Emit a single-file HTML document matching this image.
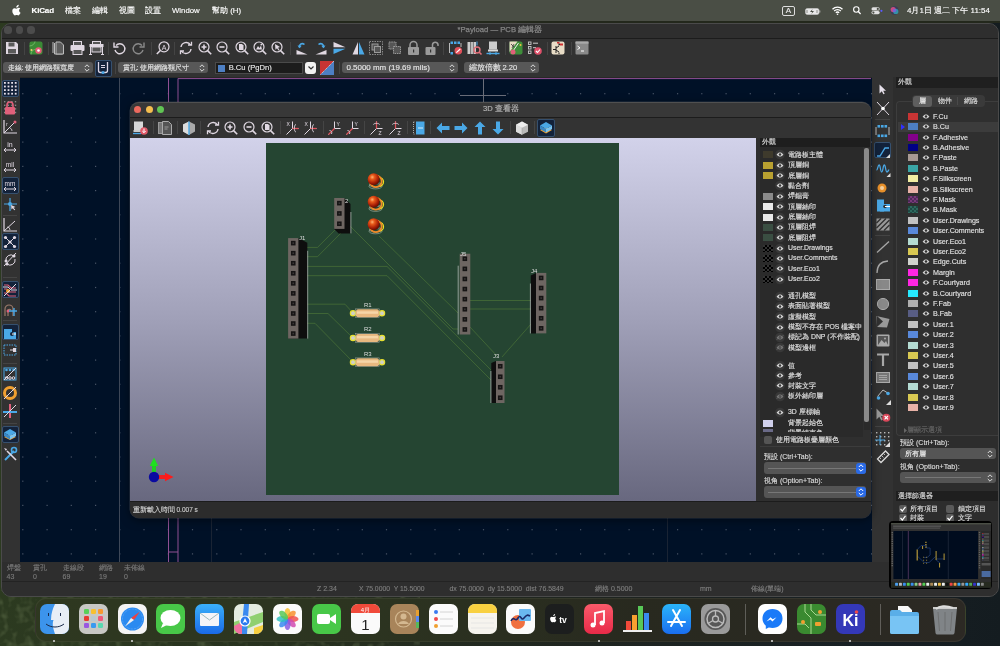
<!DOCTYPE html><html><head><meta charset="utf-8"><style>
*{box-sizing:border-box;margin:0;padding:0}
html,body{width:1000px;height:646px;overflow:hidden}
body{position:relative;font-family:"Liberation Sans",sans-serif;color:#ddd;font-size:9px;
background:#1a2014}
.a{position:absolute}
.t{position:absolute;white-space:nowrap;line-height:10px;-webkit-text-stroke:.13px}
svg{overflow:visible}

.sep{position:absolute;width:1px;background:#444}
.hsep{position:absolute;height:1px;background:#444}
.combo{position:absolute;height:11px;background:#585858;border-radius:3px;color:#e6e6e6;font-size:9px;line-height:11px;padding-left:5px;white-space:nowrap}
.hl{position:absolute;background:#10203a;border:1px solid #3a4e6a;border-radius:2px}
#wrap{position:absolute;left:0;top:0;width:1000px;height:646px;overflow:hidden;will-change:transform}</style></head><body><div id="wrap">
<div class="a" style="left:0px;top:0px;width:1000px;height:646px;background:linear-gradient(90deg,#2c3a20 0%,#26301e 30%,#1e2420 60%,#182024 85%,#141c20 100%)"></div>
<svg class="a" style="left:0px;top:590px" width="1000" height="56" viewBox="0 0 1000 56"><defs><filter id="fol" x="0" y="0" width="100%" height="100%"><feTurbulence type="fractalNoise" baseFrequency=".12" numOctaves="2" seed="7"/><feColorMatrix values="0 0 0 0 .35  0 0 0 0 .45  0 0 0 0 .22  0 0 0 1.6 -.75"/></filter></defs><rect width="420" height="56" filter="url(#fol)" opacity=".4"/></svg>
<div class="a" style="left:0px;top:0px;width:1000px;height:21px;background:#4a4e45"></div>
<svg class="a" style="left:12px;top:5px" width="8" height="10" viewBox="0 0 8 10"><path d="M5.6 1.2c.5-.6.8-1.3.7-2 -.7 0-1.4.4-1.9 1-.4.5-.8 1.2-.7 1.9.7.1 1.4-.3 1.9-.9zM6.3 2.6c-1-.1-1.9.6-2.4.6-.5 0-1.3-.6-2.1-.5C.8 2.7-.2 3.6-.2 5.5c0 1.1.4 2.3 1 3.1.5.7.9 1.3 1.6 1.3.6 0 .9-.4 1.7-.4.8 0 1 .4 1.7.4.7 0 1.1-.6 1.5-1.3.5-.7.7-1.4.7-1.4s-1.4-.5-1.4-2.1c0-1.3 1.1-1.9 1.1-2-.6-.9-1.6-1-1.9-1z" fill="#fff" transform="translate(.5 .5)"/></svg>
<div class="t" style="left:31.5px;top:5.5px;font-size:8px;color:#fff;font-weight:bold;letter-spacing:-.15px">KiCad</div>
<div class="t" style="left:65px;top:5.5px;font-size:7.8px;color:#fff;">檔案</div>
<div class="t" style="left:92px;top:5.5px;font-size:7.8px;color:#fff;">編輯</div>
<div class="t" style="left:119px;top:5.5px;font-size:7.8px;color:#fff;">視圖</div>
<div class="t" style="left:145px;top:5.5px;font-size:7.8px;color:#fff;">設置</div>
<div class="t" style="left:172px;top:5.5px;font-size:7.8px;color:#fff;">Window</div>
<div class="t" style="left:212px;top:5.5px;font-size:7.8px;color:#fff;">幫助 (H)</div>
<div class="a" style="left:782px;top:6px;width:13px;height:10px;border:1px solid #ddd;border-radius:2px"></div>
<div class="t" style="left:782px;top:6px;color:#eee;font-size:8px;width:13px;text-align:center;line-height:10px">A</div>
<svg class="a" style="left:805px;top:7.5px" width="16" height="7" viewBox="0 0 16 7"><rect x=".5" y=".5" width="13.5" height="6" rx="1.8" fill="#e8e8e8" stroke="#cfcfcf" stroke-width=".6"/><path d="M14.8 2.5v2" stroke="#bbb" stroke-width="1"/><path d="M7.6 1L5 3.9h2.2L6.4 6 9 3.1H6.8z" fill="#4a4e45"/><path d="M2 2v3M12 2v3" stroke="#4a4e45" stroke-width=".6"/></svg>
<svg class="a" style="left:832px;top:6px" width="11" height="9" viewBox="0 0 11 9"><path d="M0.5 3.2a7 7 0 0 1 10 0M2.2 5a4.5 4.5 0 0 1 6.6 0M3.9 6.8a2 2 0 0 1 3.2 0" stroke="#fff" stroke-width="1.3" fill="none"/><circle cx="5.5" cy="8.2" r=".8" fill="#fff"/></svg>
<svg class="a" style="left:853px;top:6px" width="8" height="9" viewBox="0 0 8 9"><circle cx="3.3" cy="3.5" r="2.7" stroke="#fff" stroke-width="1.1" fill="none"/><path d="M5.3 5.5L7.6 8" stroke="#fff" stroke-width="1.2"/></svg>
<svg class="a" style="left:871px;top:7px" width="12" height="7.5" viewBox="0 0 12 7.5"><rect x=".5" y=".3" width="8.2" height="3.2" rx="1.6" fill="#e0e0e0"/><rect x=".5" y="4" width="8.2" height="3.2" rx="1.6" fill="#e0e0e0"/><circle cx="6.8" cy="1.9" r="1.1" fill="#4a4e45"/><circle cx="2.4" cy="5.6" r="1.1" fill="#4a4e45"/><circle cx="10.4" cy="3.8" r="1.1" fill="#5a5aff"/></svg>
<svg class="a" style="left:890px;top:6px" width="9" height="9" viewBox="0 0 9 9"><defs><linearGradient id="sg" x1="0" y1="0" x2="1" y2="1"><stop offset="0" stop-color="#e04a8a"/><stop offset=".5" stop-color="#5a4ae0"/><stop offset="1" stop-color="#30c0e0"/></linearGradient></defs><circle cx="4.5" cy="4.5" r="4.2" fill="#3a3a5a"/><circle cx="3.2" cy="3.6" r="2.6" fill="#e0508a" opacity=".85"/><circle cx="5.8" cy="5.4" r="2.6" fill="#30b8c8" opacity=".7"/><circle cx="4.5" cy="4.5" r="1.8" fill="#7a5ae0" opacity=".8"/></svg>
<div class="t" style="left:907px;top:5.5px;font-size:8px;color:#fff;">4月1日 週二 下午 11:54</div>
<div class="a" style="left:0px;top:21px;width:1000px;height:2px;background:#23281c"></div>
<div class="a" style="left:1px;top:22.5px;width:997.5px;height:574px;background:#303030;border-radius:10px;border:1px solid #4a4a4a;overflow:hidden"></div>
<div class="a" style="left:2px;top:23.5px;width:995.5px;height:14.5px;background:#2e2e2e;border-radius:9px 9px 0 0"></div>
<div class="a" style="left:2px;top:38px;width:995.5px;height:1px;background:#1c1c1c"></div>
<div class="a" style="left:4.4px;top:26.4px;width:7.2px;height:7.2px;border-radius:50%;background:#4c4c4c"></div>
<div class="a" style="left:15.9px;top:26.4px;width:7.2px;height:7.2px;border-radius:50%;background:#4c4c4c"></div>
<div class="a" style="left:27.4px;top:26.4px;width:7.2px;height:7.2px;border-radius:50%;background:#4c4c4c"></div>
<div class="t" style="left:457.5px;top:25px;font-size:7.7px;color:#858585;-webkit-text-stroke:.25px">*Payload — PCB 編輯器</div>
<div class="a" style="left:2px;top:39px;width:995.5px;height:38px;background:#323232"></div>
<div class="a" style="left:23.5px;top:42px;width:1px;height:13px;background:#444"></div>
<div class="a" style="left:47.5px;top:42px;width:1px;height:13px;background:#444"></div>
<div class="a" style="left:108px;top:42px;width:1px;height:13px;background:#444"></div>
<div class="a" style="left:150.7px;top:42px;width:1px;height:13px;background:#444"></div>
<div class="a" style="left:173.5px;top:42px;width:1px;height:13px;background:#444"></div>
<div class="a" style="left:290px;top:42px;width:1px;height:13px;background:#444"></div>
<div class="a" style="left:443px;top:42px;width:1px;height:13px;background:#444"></div>
<div class="a" style="left:505px;top:42px;width:1px;height:13px;background:#444"></div>
<div class="a" style="left:547px;top:42px;width:1px;height:13px;background:#444"></div>
<div class="a" style="left:571px;top:42px;width:1px;height:13px;background:#444"></div>
<svg class="a" style="left:5px;top:41px" width="14" height="14" viewBox="0 0 14 14"><path d="M1 1h10l2 2v10H1z" fill="#e0d8e2"/><rect x="3.5" y="1.5" width="6" height="4" fill="#5a5a5a"/><rect x="3" y="8" width="8" height="4.5" fill="#5a5a5a"/></svg>
<svg class="a" style="left:29px;top:41px" width="14" height="14" viewBox="0 0 14 14"><rect x="0.5" y="0.5" width="13" height="13" rx="2" fill="#3b8a36"/><path d="M0.5 5C4 5 6 2 6 0.5M2 13.5C2 9 6 8 9 8" stroke="#7cc070" stroke-width=".8" fill="none"/><circle cx="9.5" cy="9.5" r="3.2" fill="#e8587a"/><circle cx="9.5" cy="9.5" r="1.3" fill="#fff"/><circle cx="2.5" cy="9" r="1" fill="#f0d070"/></svg>
<svg class="a" style="left:52px;top:41px" width="13" height="14" viewBox="0 0 13 14"><path d="M1 1v11M2.5 2v11h8" stroke="#bdbdbd" stroke-width="1" fill="none"/><path d="M4 1h4.5l3 3v9H4z" fill="#5c5c5c" stroke="#bdbdbd" stroke-width="1"/></svg>
<svg class="a" style="left:70px;top:41px" width="15" height="14" viewBox="0 0 15 14"><rect x="3.5" y="0.5" width="8" height="4" fill="#555" stroke="#e0d8e2" stroke-width="1"/><rect x="0.5" y="4" width="14" height="6" rx="1" fill="#e0d8e2"/><rect x="3" y="8.5" width="9" height="5" fill="#555" stroke="#e0d8e2" stroke-width="1"/></svg>
<svg class="a" style="left:89px;top:41px" width="15" height="14" viewBox="0 0 15 14"><rect x="3.5" y="0.5" width="8" height="3" fill="#555" stroke="#e0d8e2" stroke-width="1"/><rect x="0.5" y="3" width="14" height="3" fill="#e0d8e2"/><rect x="3" y="6" width="9" height="5" fill="#555" stroke="#e0d8e2" stroke-width="1"/><path d="M1.5 6v7.5M13.5 6v7.5M0 13.5h3M12 13.5h3" stroke="#e0d8e2" stroke-width="1"/></svg>
<svg class="a" style="left:113px;top:41px" width="13" height="14" viewBox="0 0 13 14"><path d="M3 4.5A5 5 0 1 1 2 9" stroke="#e0d8e2" stroke-width="1.4" fill="none"/><path d="M1 1.5v4.5h4.5" stroke="#e0d8e2" stroke-width="1.4" fill="none"/></svg>
<svg class="a" style="left:132px;top:41px" width="13" height="14" viewBox="0 0 13 14"><path d="M10 4.5A5 5 0 1 0 11 9" stroke="#8a8a8a" stroke-width="1.4" fill="none"/><path d="M12 1.5v4.5H7.5" stroke="#8a8a8a" stroke-width="1.4" fill="none"/></svg>
<svg class="a" style="left:155.5px;top:41px" width="14" height="14" viewBox="0 0 14 14"><circle cx="8" cy="5.8" r="5" stroke="#e0d8e2" stroke-width="1.2" fill="none"/><path d="M4.3 9.5L.8 13" stroke="#e0d8e2" stroke-width="1.6"/><text x="8" y="8.6" font-size="7" text-anchor="middle" fill="#e0d8e2" font-family="Liberation Sans">A</text></svg>
<svg class="a" style="left:179px;top:41px" width="14" height="14" viewBox="0 0 14 14"><path d="M2 6A5.2 5.2 0 0 1 11.6 4M12 8A5.2 5.2 0 0 1 2.4 10" stroke="#e0d8e2" stroke-width="1.4" fill="none"/><path d="M9 4h3.5V.8M5 10H1.5v3.2" stroke="#e0d8e2" stroke-width="1.3" fill="none"/></svg>
<svg class="a" style="left:198px;top:41px" width="14" height="14" viewBox="0 0 14 14"><circle cx="6" cy="6" r="5" stroke="#e0d8e2" stroke-width="1.2" fill="none"/><path d="M9.6 9.6L13.2 13.2" stroke="#e0d8e2" stroke-width="1.6"/><path d="M3.5 6h5M6 3.5v5" stroke="#e0d8e2" stroke-width="1.6"/></svg>
<svg class="a" style="left:216px;top:41px" width="14" height="14" viewBox="0 0 14 14"><circle cx="6" cy="6" r="5" stroke="#e0d8e2" stroke-width="1.2" fill="none"/><path d="M9.6 9.6L13.2 13.2" stroke="#e0d8e2" stroke-width="1.6"/><path d="M3.5 6h5" stroke="#e0d8e2" stroke-width="1.6"/></svg>
<svg class="a" style="left:235px;top:41px" width="14" height="14" viewBox="0 0 14 14"><circle cx="6" cy="6" r="5" stroke="#e0d8e2" stroke-width="1.2" fill="none"/><path d="M9.6 9.6L13.2 13.2" stroke="#e0d8e2" stroke-width="1.6"/><path d="M4 3h3l1.5 1.5V9H4z" fill="#e0d8e2"/></svg>
<svg class="a" style="left:253px;top:41px" width="14" height="14" viewBox="0 0 14 14"><circle cx="6" cy="6" r="5" stroke="#e0d8e2" stroke-width="1.2" fill="none"/><path d="M9.6 9.6L13.2 13.2" stroke="#e0d8e2" stroke-width="1.6"/><path d="M3 8.5L5 5l1.5 2L8 4.5l1 4z" fill="#e0d8e2"/><circle cx="8.3" cy="3.6" r=".9" fill="#e0d8e2"/></svg>
<svg class="a" style="left:271px;top:41px" width="14" height="14" viewBox="0 0 14 14"><circle cx="6" cy="6" r="5" stroke="#e0d8e2" stroke-width="1.2" fill="none"/><path d="M9.6 9.6L13.2 13.2" stroke="#e0d8e2" stroke-width="1.6"/><path d="M4 3l5 3-2 .8L8.5 9 7.5 9.5 6 7.3 4.5 8.8z" fill="#e0d8e2"/></svg>
<svg class="a" style="left:296px;top:41px" width="12" height="14" viewBox="0 0 12 14"><path d="M0.5 9L11.5 13.5H0.5z" fill="#e0d8e2"/><path d="M3.5 6.5C3 3 6 1.5 8.5 3.5" stroke="#4aa8e6" stroke-width="1.6" fill="none"/><path d="M1.5 4.5l2 2.8 2.2-2.6z" fill="#4aa8e6"/></svg>
<svg class="a" style="left:315px;top:41px" width="12" height="14" viewBox="0 0 12 14"><path d="M11.5 13.5L0.5 9v4.5z" transform="translate(12 0) scale(-1 1)" fill="#e0d8e2"/><path d="M8.5 6.5C9 3 6 1.5 3.5 3.5" stroke="#4aa8e6" stroke-width="1.6" fill="none"/><path d="M10.5 4.5l-2 2.8-2.2-2.6z" fill="#4aa8e6"/></svg>
<svg class="a" style="left:333px;top:41px" width="13" height="14" viewBox="0 0 13 14"><path d="M0.5 1L12.5 6.2H0.5z" fill="#e0d8e2"/><path d="M0.5 13L12.5 7.8H0.5z" fill="#4aa8e6"/></svg>
<svg class="a" style="left:352px;top:41px" width="13" height="14" viewBox="0 0 13 14"><path d="M6 1L0.5 13.5H6z" fill="#e0d8e2"/><path d="M7 1L12.5 13.5H7z" fill="#4aa8e6"/></svg>
<svg class="a" style="left:369px;top:41px" width="14" height="14" viewBox="0 0 14 14"><rect x="0.5" y="0.5" width="13" height="13" fill="none" stroke="#8a8a8a" stroke-dasharray="1.5 1"/><rect x="3" y="3" width="6" height="6" fill="#555" stroke="#9a9a9a"/><rect x="5.5" y="5.5" width="6" height="6" fill="#555" stroke="#9a9a9a"/></svg>
<svg class="a" style="left:388px;top:41px" width="14" height="14" viewBox="0 0 14 14"><rect x="1" y="1" width="7" height="7" fill="#555" stroke="#9a9a9a" stroke-dasharray="1.5 .8"/><rect x="5.5" y="5.5" width="7" height="7" fill="#555" stroke="#9a9a9a" stroke-dasharray="1.5 .8"/></svg>
<svg class="a" style="left:407px;top:41px" width="13" height="14" viewBox="0 0 13 14"><path d="M3 6V4a3.5 3.5 0 0 1 7 0v2" stroke="#9a9a9a" stroke-width="1.5" fill="none"/><rect x="1" y="6" width="11" height="8" rx="1" fill="#9a9a9a"/><rect x="6" y="8.5" width="1.2" height="3" fill="#333"/></svg>
<svg class="a" style="left:425px;top:41px" width="13" height="14" viewBox="0 0 13 14"><path d="M7.5 6V3.5a2.8 2.8 0 0 1 5.5 0V5" stroke="#9a9a9a" stroke-width="1.5" fill="none"/><rect x="0.5" y="6" width="10" height="8" rx="1" fill="#9a9a9a"/><rect x="5" y="8.5" width="1.2" height="3" fill="#333"/></svg>
<svg class="a" style="left:448px;top:41px" width="15" height="14" viewBox="0 0 15 14"><path d="M1.5 2v10M13 2v4" stroke="#bbb" stroke-width="1" fill="none"/><rect x="2.5" y="0.5" width="2.5" height="2.5" fill="#4aa8e6"/><rect x="6" y="0.5" width="2.5" height="2.5" fill="#4aa8e6"/><rect x="9.5" y="0.5" width="2.5" height="2.5" fill="#4aa8e6"/><rect x="2.5" y="11" width="2.5" height="2.5" fill="#4aa8e6"/><circle cx="10.3" cy="9.8" r="3.8" fill="#e0505a"/><path d="M8.3 11.6l4-3.6" stroke="#fff" stroke-width="1.2"/></svg>
<svg class="a" style="left:467px;top:41px" width="15" height="14" viewBox="0 0 15 14"><rect x="0.5" y="1" width="2.5" height="12" fill="#ccc"/><rect x="3.5" y="1" width="2.5" height="12" fill="#bbb"/><rect x="6.5" y="1" width="2.5" height="12" fill="#ccc"/><circle cx="10" cy="9" r="3" fill="none" stroke="#e0707a" stroke-width="1.4"/><path d="M12 11l2.5 2.5" stroke="#e0707a" stroke-width="1.6"/><path d="M10 0.5v4" stroke="#4aa8e6" stroke-width="1"/></svg>
<svg class="a" style="left:486px;top:41px" width="14" height="14" viewBox="0 0 14 14"><rect x="3" y="0.5" width="8" height="8" fill="#ccc"/><rect x="2" y="8.5" width="10" height="2" fill="#ddd"/><path d="M0.5 12.5h13" stroke="#4aa8e6" stroke-width="1.4"/><path d="M4 11v3M10 11v3" stroke="#4aa8e6" stroke-width="1"/></svg>
<svg class="a" style="left:509px;top:41px" width="14" height="14" viewBox="0 0 14 14"><rect x="0.5" y="0.5" width="13" height="13" rx="2" fill="#3e8e3a"/><path d="M0.5 0.5h8L0.5 11z" fill="#e6dcc4"/><path d="M2 3l3 3M3 7l2-4" stroke="#333" stroke-width=".8"/><path d="M9.5 2L3 11.5" stroke="#eee" stroke-width="1"/><circle cx="4" cy="11" r="2.5" fill="#e0607a"/><circle cx="11.5" cy="4" r="1" fill="#f0c040"/></svg>
<svg class="a" style="left:528px;top:41px" width="14" height="14" viewBox="0 0 14 14"><rect x="0.5" y="1" width="2.5" height="2.5" fill="none" stroke="#ccc" stroke-width=".9"/><rect x="0.5" y="5.5" width="2.5" height="2.5" fill="none" stroke="#ccc" stroke-width=".9"/><rect x="0.5" y="10" width="2.5" height="2.5" fill="none" stroke="#ccc" stroke-width=".9"/><path d="M5 2.2h5M5 6.7h3" stroke="#ccc" stroke-width="1"/><circle cx="10" cy="10" r="3.8" fill="#e0506a"/><path d="M8 10l1.5 1.5 2.5-3" stroke="#fff" stroke-width="1.1" fill="none"/></svg>
<svg class="a" style="left:551px;top:41px" width="14" height="14" viewBox="0 0 14 14"><rect x="0.5" y="0.5" width="13" height="13" rx="2" fill="#e8dcc6"/><path d="M2 8.5h3M5 5v7M5 7l3-2M5 9l3 2M8 4.5V2M8 11.5V13M8 3.5h4" stroke="#222" stroke-width="1" fill="none"/><rect x="9" y="2.5" width="3" height="2" fill="#d03030"/><rect x="6" y="1" width="2.5" height="1.5" fill="#d03030"/></svg>
<svg class="a" style="left:575px;top:41px" width="14" height="14" viewBox="0 0 14 14"><rect x="0.5" y="0.5" width="13" height="13" rx="1" fill="#8a8a8a"/><rect x="0.5" y="0.5" width="13" height="2.2" fill="#aaa"/><path d="M2.5 5l2.5 1.8L2.5 8.5M6 10h3" stroke="#fff" stroke-width="1" fill="none"/></svg>
<div class="combo" style="left:3px;top:62px;width:90px"></div>
<div class="t" style="left:7.5px;top:62.7px;font-size:7.1px;color:#e6e6e6;">走線: 使用網路類寬度</div>
<svg class="a" style="left:84px;top:63.5px" width="6" height="8" viewBox="0 0 6 8"><path d="M.8 3L3 .8 5.2 3M.8 5L3 7.2 5.2 5" stroke="#ddd" stroke-width="1" fill="none"/></svg>
<div class="combo" style="left:118px;top:62px;width:90px"></div>
<div class="t" style="left:122.5px;top:62.7px;font-size:7.1px;color:#e6e6e6;">貫孔: 使用網路類尺寸</div>
<svg class="a" style="left:199px;top:63.5px" width="6" height="8" viewBox="0 0 6 8"><path d="M.8 3L3 .8 5.2 3M.8 5L3 7.2 5.2 5" stroke="#ddd" stroke-width="1" fill="none"/></svg>
<div class="combo" style="left:342px;top:62px;width:116px"></div>
<div class="t" style="left:346.5px;top:62.7px;font-size:7.95px;color:#e6e6e6;">0.5000 mm (19.69 mils)</div>
<svg class="a" style="left:449px;top:63.5px" width="6" height="8" viewBox="0 0 6 8"><path d="M.8 3L3 .8 5.2 3M.8 5L3 7.2 5.2 5" stroke="#ddd" stroke-width="1" fill="none"/></svg>
<div class="combo" style="left:464px;top:62px;width:75px"></div>
<div class="t" style="left:468.5px;top:62.7px;font-size:7.5px;color:#e6e6e6;">縮放倍數 2.20</div>
<svg class="a" style="left:530px;top:63.5px" width="6" height="8" viewBox="0 0 6 8"><path d="M.8 3L3 .8 5.2 3M.8 5L3 7.2 5.2 5" stroke="#ddd" stroke-width="1" fill="none"/></svg>
<div class="a" style="left:94.5px;top:59.5px;width:17px;height:17px;background:#13223a;border:1px solid #36506e;border-radius:2px"></div>
<svg class="a" style="left:97px;top:61px" width="12" height="13" viewBox="0 0 12 13"><path d="M1.5 1v8.5a2 2 0 0 0 2 2h5a2 2 0 0 0 2-2V1" stroke="#dcd6e6" stroke-width="1.3" fill="none"/><path d="M4 4.5h4M4 6.5h4" stroke="#dcd6e6" stroke-width="1"/><circle cx="6" cy="11.6" r="1.5" fill="#4aa8e6"/></svg>
<div class="a" style="left:114.5px;top:62px;width:1px;height:12px;background:#444"></div>
<div class="a" style="left:338.5px;top:62px;width:1px;height:12px;background:#444"></div>
<div class="a" style="left:214.5px;top:62px;width:88px;height:12px;background:#1c1c1c;border:1px solid #4a4a4a"></div>
<div class="a" style="left:218px;top:64.5px;width:7px;height:7px;background:#4d7fc4"></div>
<div class="t" style="left:228.7px;top:63px;font-size:7.6px;color:#e8e8e8;">B.Cu (PgDn)</div>
<div class="a" style="left:305px;top:62px;width:11px;height:12px;background:#f2f2f2;border-radius:3px"></div>
<svg class="a" style="left:307.5px;top:66px" width="6" height="4" viewBox="0 0 6 4"><path d="M.5 .5L3 3 5.5 .5" stroke="#333" stroke-width="1.2" fill="none"/></svg>
<svg class="a" style="left:320px;top:61px" width="14" height="14" viewBox="0 0 14 14"><path d="M0 0h14v14H0z" fill="#c83434"/><path d="M14 0v14H0z" fill="#4d7fc4"/><path d="M14 0L0 14" stroke="#ddd" stroke-width="1" stroke-dasharray="1 1"/></svg>
<div class="a" style="left:2px;top:76.8px;width:995.5px;height:1px;background:#282828"></div>
<div class="a" style="left:2px;top:77px;width:18px;height:485px;background:#323232"></div>
<div class="a" style="left:20px;top:77.8px;width:851.5px;height:484.2px;background:#001127;overflow:hidden"></div>
<svg class="a" style="left:0;top:0" width="1000" height="646"><g fill="#4a5668"><rect x="22.2" y="93.1" width="1.2" height="1.2"/><rect x="22.2" y="117.3" width="1.2" height="1.2"/><rect x="22.2" y="141.5" width="1.2" height="1.2"/><rect x="22.2" y="165.8" width="1.2" height="1.2"/><rect x="22.2" y="190.0" width="1.2" height="1.2"/><rect x="22.2" y="214.2" width="1.2" height="1.2"/><rect x="22.2" y="238.4" width="1.2" height="1.2"/><rect x="22.2" y="262.6" width="1.2" height="1.2"/><rect x="22.2" y="286.9" width="1.2" height="1.2"/><rect x="22.2" y="311.1" width="1.2" height="1.2"/><rect x="22.2" y="335.3" width="1.2" height="1.2"/><rect x="22.2" y="359.5" width="1.2" height="1.2"/><rect x="22.2" y="383.7" width="1.2" height="1.2"/><rect x="22.2" y="408.0" width="1.2" height="1.2"/><rect x="22.2" y="432.2" width="1.2" height="1.2"/><rect x="22.2" y="456.4" width="1.2" height="1.2"/><rect x="22.2" y="480.6" width="1.2" height="1.2"/><rect x="22.2" y="504.8" width="1.2" height="1.2"/><rect x="22.2" y="529.1" width="1.2" height="1.2"/><rect x="22.2" y="553.3" width="1.2" height="1.2"/><rect x="46.5" y="93.1" width="1.2" height="1.2"/><rect x="46.5" y="117.3" width="1.2" height="1.2"/><rect x="46.5" y="141.5" width="1.2" height="1.2"/><rect x="46.5" y="165.8" width="1.2" height="1.2"/><rect x="46.5" y="190.0" width="1.2" height="1.2"/><rect x="46.5" y="214.2" width="1.2" height="1.2"/><rect x="46.5" y="238.4" width="1.2" height="1.2"/><rect x="46.5" y="262.6" width="1.2" height="1.2"/><rect x="46.5" y="286.9" width="1.2" height="1.2"/><rect x="46.5" y="311.1" width="1.2" height="1.2"/><rect x="46.5" y="335.3" width="1.2" height="1.2"/><rect x="46.5" y="359.5" width="1.2" height="1.2"/><rect x="46.5" y="383.7" width="1.2" height="1.2"/><rect x="46.5" y="408.0" width="1.2" height="1.2"/><rect x="46.5" y="432.2" width="1.2" height="1.2"/><rect x="46.5" y="456.4" width="1.2" height="1.2"/><rect x="46.5" y="480.6" width="1.2" height="1.2"/><rect x="46.5" y="504.8" width="1.2" height="1.2"/><rect x="46.5" y="529.1" width="1.2" height="1.2"/><rect x="46.5" y="553.3" width="1.2" height="1.2"/><rect x="70.7" y="93.1" width="1.2" height="1.2"/><rect x="70.7" y="117.3" width="1.2" height="1.2"/><rect x="70.7" y="141.5" width="1.2" height="1.2"/><rect x="70.7" y="165.8" width="1.2" height="1.2"/><rect x="70.7" y="190.0" width="1.2" height="1.2"/><rect x="70.7" y="214.2" width="1.2" height="1.2"/><rect x="70.7" y="238.4" width="1.2" height="1.2"/><rect x="70.7" y="262.6" width="1.2" height="1.2"/><rect x="70.7" y="286.9" width="1.2" height="1.2"/><rect x="70.7" y="311.1" width="1.2" height="1.2"/><rect x="70.7" y="335.3" width="1.2" height="1.2"/><rect x="70.7" y="359.5" width="1.2" height="1.2"/><rect x="70.7" y="383.7" width="1.2" height="1.2"/><rect x="70.7" y="408.0" width="1.2" height="1.2"/><rect x="70.7" y="432.2" width="1.2" height="1.2"/><rect x="70.7" y="456.4" width="1.2" height="1.2"/><rect x="70.7" y="480.6" width="1.2" height="1.2"/><rect x="70.7" y="504.8" width="1.2" height="1.2"/><rect x="70.7" y="529.1" width="1.2" height="1.2"/><rect x="70.7" y="553.3" width="1.2" height="1.2"/><rect x="95.0" y="93.1" width="1.2" height="1.2"/><rect x="95.0" y="117.3" width="1.2" height="1.2"/><rect x="95.0" y="141.5" width="1.2" height="1.2"/><rect x="95.0" y="165.8" width="1.2" height="1.2"/><rect x="95.0" y="190.0" width="1.2" height="1.2"/><rect x="95.0" y="214.2" width="1.2" height="1.2"/><rect x="95.0" y="238.4" width="1.2" height="1.2"/><rect x="95.0" y="262.6" width="1.2" height="1.2"/><rect x="95.0" y="286.9" width="1.2" height="1.2"/><rect x="95.0" y="311.1" width="1.2" height="1.2"/><rect x="95.0" y="335.3" width="1.2" height="1.2"/><rect x="95.0" y="359.5" width="1.2" height="1.2"/><rect x="95.0" y="383.7" width="1.2" height="1.2"/><rect x="95.0" y="408.0" width="1.2" height="1.2"/><rect x="95.0" y="432.2" width="1.2" height="1.2"/><rect x="95.0" y="456.4" width="1.2" height="1.2"/><rect x="95.0" y="480.6" width="1.2" height="1.2"/><rect x="95.0" y="504.8" width="1.2" height="1.2"/><rect x="95.0" y="529.1" width="1.2" height="1.2"/><rect x="95.0" y="553.3" width="1.2" height="1.2"/><rect x="119.2" y="93.1" width="1.2" height="1.2"/><rect x="119.2" y="117.3" width="1.2" height="1.2"/><rect x="119.2" y="141.5" width="1.2" height="1.2"/><rect x="119.2" y="165.8" width="1.2" height="1.2"/><rect x="119.2" y="190.0" width="1.2" height="1.2"/><rect x="119.2" y="214.2" width="1.2" height="1.2"/><rect x="119.2" y="238.4" width="1.2" height="1.2"/><rect x="119.2" y="262.6" width="1.2" height="1.2"/><rect x="119.2" y="286.9" width="1.2" height="1.2"/><rect x="119.2" y="311.1" width="1.2" height="1.2"/><rect x="119.2" y="335.3" width="1.2" height="1.2"/><rect x="119.2" y="359.5" width="1.2" height="1.2"/><rect x="119.2" y="383.7" width="1.2" height="1.2"/><rect x="119.2" y="408.0" width="1.2" height="1.2"/><rect x="119.2" y="432.2" width="1.2" height="1.2"/><rect x="119.2" y="456.4" width="1.2" height="1.2"/><rect x="119.2" y="480.6" width="1.2" height="1.2"/><rect x="119.2" y="504.8" width="1.2" height="1.2"/><rect x="119.2" y="529.1" width="1.2" height="1.2"/><rect x="119.2" y="553.3" width="1.2" height="1.2"/><rect x="143.4" y="93.1" width="1.2" height="1.2"/><rect x="143.4" y="117.3" width="1.2" height="1.2"/><rect x="143.4" y="141.5" width="1.2" height="1.2"/><rect x="143.4" y="165.8" width="1.2" height="1.2"/><rect x="143.4" y="190.0" width="1.2" height="1.2"/><rect x="143.4" y="214.2" width="1.2" height="1.2"/><rect x="143.4" y="238.4" width="1.2" height="1.2"/><rect x="143.4" y="262.6" width="1.2" height="1.2"/><rect x="143.4" y="286.9" width="1.2" height="1.2"/><rect x="143.4" y="311.1" width="1.2" height="1.2"/><rect x="143.4" y="335.3" width="1.2" height="1.2"/><rect x="143.4" y="359.5" width="1.2" height="1.2"/><rect x="143.4" y="383.7" width="1.2" height="1.2"/><rect x="143.4" y="408.0" width="1.2" height="1.2"/><rect x="143.4" y="432.2" width="1.2" height="1.2"/><rect x="143.4" y="456.4" width="1.2" height="1.2"/><rect x="143.4" y="480.6" width="1.2" height="1.2"/><rect x="143.4" y="504.8" width="1.2" height="1.2"/><rect x="143.4" y="529.1" width="1.2" height="1.2"/><rect x="143.4" y="553.3" width="1.2" height="1.2"/><rect x="167.7" y="93.1" width="1.2" height="1.2"/><rect x="167.7" y="117.3" width="1.2" height="1.2"/><rect x="167.7" y="141.5" width="1.2" height="1.2"/><rect x="167.7" y="165.8" width="1.2" height="1.2"/><rect x="167.7" y="190.0" width="1.2" height="1.2"/><rect x="167.7" y="214.2" width="1.2" height="1.2"/><rect x="167.7" y="238.4" width="1.2" height="1.2"/><rect x="167.7" y="262.6" width="1.2" height="1.2"/><rect x="167.7" y="286.9" width="1.2" height="1.2"/><rect x="167.7" y="311.1" width="1.2" height="1.2"/><rect x="167.7" y="335.3" width="1.2" height="1.2"/><rect x="167.7" y="359.5" width="1.2" height="1.2"/><rect x="167.7" y="383.7" width="1.2" height="1.2"/><rect x="167.7" y="408.0" width="1.2" height="1.2"/><rect x="167.7" y="432.2" width="1.2" height="1.2"/><rect x="167.7" y="456.4" width="1.2" height="1.2"/><rect x="167.7" y="480.6" width="1.2" height="1.2"/><rect x="167.7" y="504.8" width="1.2" height="1.2"/><rect x="167.7" y="529.1" width="1.2" height="1.2"/><rect x="167.7" y="553.3" width="1.2" height="1.2"/><rect x="191.9" y="93.1" width="1.2" height="1.2"/><rect x="191.9" y="117.3" width="1.2" height="1.2"/><rect x="191.9" y="141.5" width="1.2" height="1.2"/><rect x="191.9" y="165.8" width="1.2" height="1.2"/><rect x="191.9" y="190.0" width="1.2" height="1.2"/><rect x="191.9" y="214.2" width="1.2" height="1.2"/><rect x="191.9" y="238.4" width="1.2" height="1.2"/><rect x="191.9" y="262.6" width="1.2" height="1.2"/><rect x="191.9" y="286.9" width="1.2" height="1.2"/><rect x="191.9" y="311.1" width="1.2" height="1.2"/><rect x="191.9" y="335.3" width="1.2" height="1.2"/><rect x="191.9" y="359.5" width="1.2" height="1.2"/><rect x="191.9" y="383.7" width="1.2" height="1.2"/><rect x="191.9" y="408.0" width="1.2" height="1.2"/><rect x="191.9" y="432.2" width="1.2" height="1.2"/><rect x="191.9" y="456.4" width="1.2" height="1.2"/><rect x="191.9" y="480.6" width="1.2" height="1.2"/><rect x="191.9" y="504.8" width="1.2" height="1.2"/><rect x="191.9" y="529.1" width="1.2" height="1.2"/><rect x="191.9" y="553.3" width="1.2" height="1.2"/><rect x="216.2" y="93.1" width="1.2" height="1.2"/><rect x="216.2" y="117.3" width="1.2" height="1.2"/><rect x="216.2" y="141.5" width="1.2" height="1.2"/><rect x="216.2" y="165.8" width="1.2" height="1.2"/><rect x="216.2" y="190.0" width="1.2" height="1.2"/><rect x="216.2" y="214.2" width="1.2" height="1.2"/><rect x="216.2" y="238.4" width="1.2" height="1.2"/><rect x="216.2" y="262.6" width="1.2" height="1.2"/><rect x="216.2" y="286.9" width="1.2" height="1.2"/><rect x="216.2" y="311.1" width="1.2" height="1.2"/><rect x="216.2" y="335.3" width="1.2" height="1.2"/><rect x="216.2" y="359.5" width="1.2" height="1.2"/><rect x="216.2" y="383.7" width="1.2" height="1.2"/><rect x="216.2" y="408.0" width="1.2" height="1.2"/><rect x="216.2" y="432.2" width="1.2" height="1.2"/><rect x="216.2" y="456.4" width="1.2" height="1.2"/><rect x="216.2" y="480.6" width="1.2" height="1.2"/><rect x="216.2" y="504.8" width="1.2" height="1.2"/><rect x="216.2" y="529.1" width="1.2" height="1.2"/><rect x="216.2" y="553.3" width="1.2" height="1.2"/><rect x="240.4" y="93.1" width="1.2" height="1.2"/><rect x="240.4" y="117.3" width="1.2" height="1.2"/><rect x="240.4" y="141.5" width="1.2" height="1.2"/><rect x="240.4" y="165.8" width="1.2" height="1.2"/><rect x="240.4" y="190.0" width="1.2" height="1.2"/><rect x="240.4" y="214.2" width="1.2" height="1.2"/><rect x="240.4" y="238.4" width="1.2" height="1.2"/><rect x="240.4" y="262.6" width="1.2" height="1.2"/><rect x="240.4" y="286.9" width="1.2" height="1.2"/><rect x="240.4" y="311.1" width="1.2" height="1.2"/><rect x="240.4" y="335.3" width="1.2" height="1.2"/><rect x="240.4" y="359.5" width="1.2" height="1.2"/><rect x="240.4" y="383.7" width="1.2" height="1.2"/><rect x="240.4" y="408.0" width="1.2" height="1.2"/><rect x="240.4" y="432.2" width="1.2" height="1.2"/><rect x="240.4" y="456.4" width="1.2" height="1.2"/><rect x="240.4" y="480.6" width="1.2" height="1.2"/><rect x="240.4" y="504.8" width="1.2" height="1.2"/><rect x="240.4" y="529.1" width="1.2" height="1.2"/><rect x="240.4" y="553.3" width="1.2" height="1.2"/><rect x="264.7" y="93.1" width="1.2" height="1.2"/><rect x="264.7" y="117.3" width="1.2" height="1.2"/><rect x="264.7" y="141.5" width="1.2" height="1.2"/><rect x="264.7" y="165.8" width="1.2" height="1.2"/><rect x="264.7" y="190.0" width="1.2" height="1.2"/><rect x="264.7" y="214.2" width="1.2" height="1.2"/><rect x="264.7" y="238.4" width="1.2" height="1.2"/><rect x="264.7" y="262.6" width="1.2" height="1.2"/><rect x="264.7" y="286.9" width="1.2" height="1.2"/><rect x="264.7" y="311.1" width="1.2" height="1.2"/><rect x="264.7" y="335.3" width="1.2" height="1.2"/><rect x="264.7" y="359.5" width="1.2" height="1.2"/><rect x="264.7" y="383.7" width="1.2" height="1.2"/><rect x="264.7" y="408.0" width="1.2" height="1.2"/><rect x="264.7" y="432.2" width="1.2" height="1.2"/><rect x="264.7" y="456.4" width="1.2" height="1.2"/><rect x="264.7" y="480.6" width="1.2" height="1.2"/><rect x="264.7" y="504.8" width="1.2" height="1.2"/><rect x="264.7" y="529.1" width="1.2" height="1.2"/><rect x="264.7" y="553.3" width="1.2" height="1.2"/><rect x="288.9" y="93.1" width="1.2" height="1.2"/><rect x="288.9" y="117.3" width="1.2" height="1.2"/><rect x="288.9" y="141.5" width="1.2" height="1.2"/><rect x="288.9" y="165.8" width="1.2" height="1.2"/><rect x="288.9" y="190.0" width="1.2" height="1.2"/><rect x="288.9" y="214.2" width="1.2" height="1.2"/><rect x="288.9" y="238.4" width="1.2" height="1.2"/><rect x="288.9" y="262.6" width="1.2" height="1.2"/><rect x="288.9" y="286.9" width="1.2" height="1.2"/><rect x="288.9" y="311.1" width="1.2" height="1.2"/><rect x="288.9" y="335.3" width="1.2" height="1.2"/><rect x="288.9" y="359.5" width="1.2" height="1.2"/><rect x="288.9" y="383.7" width="1.2" height="1.2"/><rect x="288.9" y="408.0" width="1.2" height="1.2"/><rect x="288.9" y="432.2" width="1.2" height="1.2"/><rect x="288.9" y="456.4" width="1.2" height="1.2"/><rect x="288.9" y="480.6" width="1.2" height="1.2"/><rect x="288.9" y="504.8" width="1.2" height="1.2"/><rect x="288.9" y="529.1" width="1.2" height="1.2"/><rect x="288.9" y="553.3" width="1.2" height="1.2"/><rect x="313.2" y="93.1" width="1.2" height="1.2"/><rect x="313.2" y="117.3" width="1.2" height="1.2"/><rect x="313.2" y="141.5" width="1.2" height="1.2"/><rect x="313.2" y="165.8" width="1.2" height="1.2"/><rect x="313.2" y="190.0" width="1.2" height="1.2"/><rect x="313.2" y="214.2" width="1.2" height="1.2"/><rect x="313.2" y="238.4" width="1.2" height="1.2"/><rect x="313.2" y="262.6" width="1.2" height="1.2"/><rect x="313.2" y="286.9" width="1.2" height="1.2"/><rect x="313.2" y="311.1" width="1.2" height="1.2"/><rect x="313.2" y="335.3" width="1.2" height="1.2"/><rect x="313.2" y="359.5" width="1.2" height="1.2"/><rect x="313.2" y="383.7" width="1.2" height="1.2"/><rect x="313.2" y="408.0" width="1.2" height="1.2"/><rect x="313.2" y="432.2" width="1.2" height="1.2"/><rect x="313.2" y="456.4" width="1.2" height="1.2"/><rect x="313.2" y="480.6" width="1.2" height="1.2"/><rect x="313.2" y="504.8" width="1.2" height="1.2"/><rect x="313.2" y="529.1" width="1.2" height="1.2"/><rect x="313.2" y="553.3" width="1.2" height="1.2"/><rect x="337.4" y="93.1" width="1.2" height="1.2"/><rect x="337.4" y="117.3" width="1.2" height="1.2"/><rect x="337.4" y="141.5" width="1.2" height="1.2"/><rect x="337.4" y="165.8" width="1.2" height="1.2"/><rect x="337.4" y="190.0" width="1.2" height="1.2"/><rect x="337.4" y="214.2" width="1.2" height="1.2"/><rect x="337.4" y="238.4" width="1.2" height="1.2"/><rect x="337.4" y="262.6" width="1.2" height="1.2"/><rect x="337.4" y="286.9" width="1.2" height="1.2"/><rect x="337.4" y="311.1" width="1.2" height="1.2"/><rect x="337.4" y="335.3" width="1.2" height="1.2"/><rect x="337.4" y="359.5" width="1.2" height="1.2"/><rect x="337.4" y="383.7" width="1.2" height="1.2"/><rect x="337.4" y="408.0" width="1.2" height="1.2"/><rect x="337.4" y="432.2" width="1.2" height="1.2"/><rect x="337.4" y="456.4" width="1.2" height="1.2"/><rect x="337.4" y="480.6" width="1.2" height="1.2"/><rect x="337.4" y="504.8" width="1.2" height="1.2"/><rect x="337.4" y="529.1" width="1.2" height="1.2"/><rect x="337.4" y="553.3" width="1.2" height="1.2"/><rect x="361.7" y="93.1" width="1.2" height="1.2"/><rect x="361.7" y="117.3" width="1.2" height="1.2"/><rect x="361.7" y="141.5" width="1.2" height="1.2"/><rect x="361.7" y="165.8" width="1.2" height="1.2"/><rect x="361.7" y="190.0" width="1.2" height="1.2"/><rect x="361.7" y="214.2" width="1.2" height="1.2"/><rect x="361.7" y="238.4" width="1.2" height="1.2"/><rect x="361.7" y="262.6" width="1.2" height="1.2"/><rect x="361.7" y="286.9" width="1.2" height="1.2"/><rect x="361.7" y="311.1" width="1.2" height="1.2"/><rect x="361.7" y="335.3" width="1.2" height="1.2"/><rect x="361.7" y="359.5" width="1.2" height="1.2"/><rect x="361.7" y="383.7" width="1.2" height="1.2"/><rect x="361.7" y="408.0" width="1.2" height="1.2"/><rect x="361.7" y="432.2" width="1.2" height="1.2"/><rect x="361.7" y="456.4" width="1.2" height="1.2"/><rect x="361.7" y="480.6" width="1.2" height="1.2"/><rect x="361.7" y="504.8" width="1.2" height="1.2"/><rect x="361.7" y="529.1" width="1.2" height="1.2"/><rect x="361.7" y="553.3" width="1.2" height="1.2"/><rect x="385.9" y="93.1" width="1.2" height="1.2"/><rect x="385.9" y="117.3" width="1.2" height="1.2"/><rect x="385.9" y="141.5" width="1.2" height="1.2"/><rect x="385.9" y="165.8" width="1.2" height="1.2"/><rect x="385.9" y="190.0" width="1.2" height="1.2"/><rect x="385.9" y="214.2" width="1.2" height="1.2"/><rect x="385.9" y="238.4" width="1.2" height="1.2"/><rect x="385.9" y="262.6" width="1.2" height="1.2"/><rect x="385.9" y="286.9" width="1.2" height="1.2"/><rect x="385.9" y="311.1" width="1.2" height="1.2"/><rect x="385.9" y="335.3" width="1.2" height="1.2"/><rect x="385.9" y="359.5" width="1.2" height="1.2"/><rect x="385.9" y="383.7" width="1.2" height="1.2"/><rect x="385.9" y="408.0" width="1.2" height="1.2"/><rect x="385.9" y="432.2" width="1.2" height="1.2"/><rect x="385.9" y="456.4" width="1.2" height="1.2"/><rect x="385.9" y="480.6" width="1.2" height="1.2"/><rect x="385.9" y="504.8" width="1.2" height="1.2"/><rect x="385.9" y="529.1" width="1.2" height="1.2"/><rect x="385.9" y="553.3" width="1.2" height="1.2"/><rect x="410.2" y="93.1" width="1.2" height="1.2"/><rect x="410.2" y="117.3" width="1.2" height="1.2"/><rect x="410.2" y="141.5" width="1.2" height="1.2"/><rect x="410.2" y="165.8" width="1.2" height="1.2"/><rect x="410.2" y="190.0" width="1.2" height="1.2"/><rect x="410.2" y="214.2" width="1.2" height="1.2"/><rect x="410.2" y="238.4" width="1.2" height="1.2"/><rect x="410.2" y="262.6" width="1.2" height="1.2"/><rect x="410.2" y="286.9" width="1.2" height="1.2"/><rect x="410.2" y="311.1" width="1.2" height="1.2"/><rect x="410.2" y="335.3" width="1.2" height="1.2"/><rect x="410.2" y="359.5" width="1.2" height="1.2"/><rect x="410.2" y="383.7" width="1.2" height="1.2"/><rect x="410.2" y="408.0" width="1.2" height="1.2"/><rect x="410.2" y="432.2" width="1.2" height="1.2"/><rect x="410.2" y="456.4" width="1.2" height="1.2"/><rect x="410.2" y="480.6" width="1.2" height="1.2"/><rect x="410.2" y="504.8" width="1.2" height="1.2"/><rect x="410.2" y="529.1" width="1.2" height="1.2"/><rect x="410.2" y="553.3" width="1.2" height="1.2"/><rect x="434.4" y="93.1" width="1.2" height="1.2"/><rect x="434.4" y="117.3" width="1.2" height="1.2"/><rect x="434.4" y="141.5" width="1.2" height="1.2"/><rect x="434.4" y="165.8" width="1.2" height="1.2"/><rect x="434.4" y="190.0" width="1.2" height="1.2"/><rect x="434.4" y="214.2" width="1.2" height="1.2"/><rect x="434.4" y="238.4" width="1.2" height="1.2"/><rect x="434.4" y="262.6" width="1.2" height="1.2"/><rect x="434.4" y="286.9" width="1.2" height="1.2"/><rect x="434.4" y="311.1" width="1.2" height="1.2"/><rect x="434.4" y="335.3" width="1.2" height="1.2"/><rect x="434.4" y="359.5" width="1.2" height="1.2"/><rect x="434.4" y="383.7" width="1.2" height="1.2"/><rect x="434.4" y="408.0" width="1.2" height="1.2"/><rect x="434.4" y="432.2" width="1.2" height="1.2"/><rect x="434.4" y="456.4" width="1.2" height="1.2"/><rect x="434.4" y="480.6" width="1.2" height="1.2"/><rect x="434.4" y="504.8" width="1.2" height="1.2"/><rect x="434.4" y="529.1" width="1.2" height="1.2"/><rect x="434.4" y="553.3" width="1.2" height="1.2"/><rect x="458.7" y="93.1" width="1.2" height="1.2"/><rect x="458.7" y="117.3" width="1.2" height="1.2"/><rect x="458.7" y="141.5" width="1.2" height="1.2"/><rect x="458.7" y="165.8" width="1.2" height="1.2"/><rect x="458.7" y="190.0" width="1.2" height="1.2"/><rect x="458.7" y="214.2" width="1.2" height="1.2"/><rect x="458.7" y="238.4" width="1.2" height="1.2"/><rect x="458.7" y="262.6" width="1.2" height="1.2"/><rect x="458.7" y="286.9" width="1.2" height="1.2"/><rect x="458.7" y="311.1" width="1.2" height="1.2"/><rect x="458.7" y="335.3" width="1.2" height="1.2"/><rect x="458.7" y="359.5" width="1.2" height="1.2"/><rect x="458.7" y="383.7" width="1.2" height="1.2"/><rect x="458.7" y="408.0" width="1.2" height="1.2"/><rect x="458.7" y="432.2" width="1.2" height="1.2"/><rect x="458.7" y="456.4" width="1.2" height="1.2"/><rect x="458.7" y="480.6" width="1.2" height="1.2"/><rect x="458.7" y="504.8" width="1.2" height="1.2"/><rect x="458.7" y="529.1" width="1.2" height="1.2"/><rect x="458.7" y="553.3" width="1.2" height="1.2"/><rect x="482.9" y="93.1" width="1.2" height="1.2"/><rect x="482.9" y="117.3" width="1.2" height="1.2"/><rect x="482.9" y="141.5" width="1.2" height="1.2"/><rect x="482.9" y="165.8" width="1.2" height="1.2"/><rect x="482.9" y="190.0" width="1.2" height="1.2"/><rect x="482.9" y="214.2" width="1.2" height="1.2"/><rect x="482.9" y="238.4" width="1.2" height="1.2"/><rect x="482.9" y="262.6" width="1.2" height="1.2"/><rect x="482.9" y="286.9" width="1.2" height="1.2"/><rect x="482.9" y="311.1" width="1.2" height="1.2"/><rect x="482.9" y="335.3" width="1.2" height="1.2"/><rect x="482.9" y="359.5" width="1.2" height="1.2"/><rect x="482.9" y="383.7" width="1.2" height="1.2"/><rect x="482.9" y="408.0" width="1.2" height="1.2"/><rect x="482.9" y="432.2" width="1.2" height="1.2"/><rect x="482.9" y="456.4" width="1.2" height="1.2"/><rect x="482.9" y="480.6" width="1.2" height="1.2"/><rect x="482.9" y="504.8" width="1.2" height="1.2"/><rect x="482.9" y="529.1" width="1.2" height="1.2"/><rect x="482.9" y="553.3" width="1.2" height="1.2"/><rect x="507.2" y="93.1" width="1.2" height="1.2"/><rect x="507.2" y="117.3" width="1.2" height="1.2"/><rect x="507.2" y="141.5" width="1.2" height="1.2"/><rect x="507.2" y="165.8" width="1.2" height="1.2"/><rect x="507.2" y="190.0" width="1.2" height="1.2"/><rect x="507.2" y="214.2" width="1.2" height="1.2"/><rect x="507.2" y="238.4" width="1.2" height="1.2"/><rect x="507.2" y="262.6" width="1.2" height="1.2"/><rect x="507.2" y="286.9" width="1.2" height="1.2"/><rect x="507.2" y="311.1" width="1.2" height="1.2"/><rect x="507.2" y="335.3" width="1.2" height="1.2"/><rect x="507.2" y="359.5" width="1.2" height="1.2"/><rect x="507.2" y="383.7" width="1.2" height="1.2"/><rect x="507.2" y="408.0" width="1.2" height="1.2"/><rect x="507.2" y="432.2" width="1.2" height="1.2"/><rect x="507.2" y="456.4" width="1.2" height="1.2"/><rect x="507.2" y="480.6" width="1.2" height="1.2"/><rect x="507.2" y="504.8" width="1.2" height="1.2"/><rect x="507.2" y="529.1" width="1.2" height="1.2"/><rect x="507.2" y="553.3" width="1.2" height="1.2"/><rect x="531.5" y="93.1" width="1.2" height="1.2"/><rect x="531.5" y="117.3" width="1.2" height="1.2"/><rect x="531.5" y="141.5" width="1.2" height="1.2"/><rect x="531.5" y="165.8" width="1.2" height="1.2"/><rect x="531.5" y="190.0" width="1.2" height="1.2"/><rect x="531.5" y="214.2" width="1.2" height="1.2"/><rect x="531.5" y="238.4" width="1.2" height="1.2"/><rect x="531.5" y="262.6" width="1.2" height="1.2"/><rect x="531.5" y="286.9" width="1.2" height="1.2"/><rect x="531.5" y="311.1" width="1.2" height="1.2"/><rect x="531.5" y="335.3" width="1.2" height="1.2"/><rect x="531.5" y="359.5" width="1.2" height="1.2"/><rect x="531.5" y="383.7" width="1.2" height="1.2"/><rect x="531.5" y="408.0" width="1.2" height="1.2"/><rect x="531.5" y="432.2" width="1.2" height="1.2"/><rect x="531.5" y="456.4" width="1.2" height="1.2"/><rect x="531.5" y="480.6" width="1.2" height="1.2"/><rect x="531.5" y="504.8" width="1.2" height="1.2"/><rect x="531.5" y="529.1" width="1.2" height="1.2"/><rect x="531.5" y="553.3" width="1.2" height="1.2"/><rect x="555.7" y="93.1" width="1.2" height="1.2"/><rect x="555.7" y="117.3" width="1.2" height="1.2"/><rect x="555.7" y="141.5" width="1.2" height="1.2"/><rect x="555.7" y="165.8" width="1.2" height="1.2"/><rect x="555.7" y="190.0" width="1.2" height="1.2"/><rect x="555.7" y="214.2" width="1.2" height="1.2"/><rect x="555.7" y="238.4" width="1.2" height="1.2"/><rect x="555.7" y="262.6" width="1.2" height="1.2"/><rect x="555.7" y="286.9" width="1.2" height="1.2"/><rect x="555.7" y="311.1" width="1.2" height="1.2"/><rect x="555.7" y="335.3" width="1.2" height="1.2"/><rect x="555.7" y="359.5" width="1.2" height="1.2"/><rect x="555.7" y="383.7" width="1.2" height="1.2"/><rect x="555.7" y="408.0" width="1.2" height="1.2"/><rect x="555.7" y="432.2" width="1.2" height="1.2"/><rect x="555.7" y="456.4" width="1.2" height="1.2"/><rect x="555.7" y="480.6" width="1.2" height="1.2"/><rect x="555.7" y="504.8" width="1.2" height="1.2"/><rect x="555.7" y="529.1" width="1.2" height="1.2"/><rect x="555.7" y="553.3" width="1.2" height="1.2"/><rect x="580.0" y="93.1" width="1.2" height="1.2"/><rect x="580.0" y="117.3" width="1.2" height="1.2"/><rect x="580.0" y="141.5" width="1.2" height="1.2"/><rect x="580.0" y="165.8" width="1.2" height="1.2"/><rect x="580.0" y="190.0" width="1.2" height="1.2"/><rect x="580.0" y="214.2" width="1.2" height="1.2"/><rect x="580.0" y="238.4" width="1.2" height="1.2"/><rect x="580.0" y="262.6" width="1.2" height="1.2"/><rect x="580.0" y="286.9" width="1.2" height="1.2"/><rect x="580.0" y="311.1" width="1.2" height="1.2"/><rect x="580.0" y="335.3" width="1.2" height="1.2"/><rect x="580.0" y="359.5" width="1.2" height="1.2"/><rect x="580.0" y="383.7" width="1.2" height="1.2"/><rect x="580.0" y="408.0" width="1.2" height="1.2"/><rect x="580.0" y="432.2" width="1.2" height="1.2"/><rect x="580.0" y="456.4" width="1.2" height="1.2"/><rect x="580.0" y="480.6" width="1.2" height="1.2"/><rect x="580.0" y="504.8" width="1.2" height="1.2"/><rect x="580.0" y="529.1" width="1.2" height="1.2"/><rect x="580.0" y="553.3" width="1.2" height="1.2"/><rect x="604.2" y="93.1" width="1.2" height="1.2"/><rect x="604.2" y="117.3" width="1.2" height="1.2"/><rect x="604.2" y="141.5" width="1.2" height="1.2"/><rect x="604.2" y="165.8" width="1.2" height="1.2"/><rect x="604.2" y="190.0" width="1.2" height="1.2"/><rect x="604.2" y="214.2" width="1.2" height="1.2"/><rect x="604.2" y="238.4" width="1.2" height="1.2"/><rect x="604.2" y="262.6" width="1.2" height="1.2"/><rect x="604.2" y="286.9" width="1.2" height="1.2"/><rect x="604.2" y="311.1" width="1.2" height="1.2"/><rect x="604.2" y="335.3" width="1.2" height="1.2"/><rect x="604.2" y="359.5" width="1.2" height="1.2"/><rect x="604.2" y="383.7" width="1.2" height="1.2"/><rect x="604.2" y="408.0" width="1.2" height="1.2"/><rect x="604.2" y="432.2" width="1.2" height="1.2"/><rect x="604.2" y="456.4" width="1.2" height="1.2"/><rect x="604.2" y="480.6" width="1.2" height="1.2"/><rect x="604.2" y="504.8" width="1.2" height="1.2"/><rect x="604.2" y="529.1" width="1.2" height="1.2"/><rect x="604.2" y="553.3" width="1.2" height="1.2"/><rect x="628.5" y="93.1" width="1.2" height="1.2"/><rect x="628.5" y="117.3" width="1.2" height="1.2"/><rect x="628.5" y="141.5" width="1.2" height="1.2"/><rect x="628.5" y="165.8" width="1.2" height="1.2"/><rect x="628.5" y="190.0" width="1.2" height="1.2"/><rect x="628.5" y="214.2" width="1.2" height="1.2"/><rect x="628.5" y="238.4" width="1.2" height="1.2"/><rect x="628.5" y="262.6" width="1.2" height="1.2"/><rect x="628.5" y="286.9" width="1.2" height="1.2"/><rect x="628.5" y="311.1" width="1.2" height="1.2"/><rect x="628.5" y="335.3" width="1.2" height="1.2"/><rect x="628.5" y="359.5" width="1.2" height="1.2"/><rect x="628.5" y="383.7" width="1.2" height="1.2"/><rect x="628.5" y="408.0" width="1.2" height="1.2"/><rect x="628.5" y="432.2" width="1.2" height="1.2"/><rect x="628.5" y="456.4" width="1.2" height="1.2"/><rect x="628.5" y="480.6" width="1.2" height="1.2"/><rect x="628.5" y="504.8" width="1.2" height="1.2"/><rect x="628.5" y="529.1" width="1.2" height="1.2"/><rect x="628.5" y="553.3" width="1.2" height="1.2"/><rect x="652.7" y="93.1" width="1.2" height="1.2"/><rect x="652.7" y="117.3" width="1.2" height="1.2"/><rect x="652.7" y="141.5" width="1.2" height="1.2"/><rect x="652.7" y="165.8" width="1.2" height="1.2"/><rect x="652.7" y="190.0" width="1.2" height="1.2"/><rect x="652.7" y="214.2" width="1.2" height="1.2"/><rect x="652.7" y="238.4" width="1.2" height="1.2"/><rect x="652.7" y="262.6" width="1.2" height="1.2"/><rect x="652.7" y="286.9" width="1.2" height="1.2"/><rect x="652.7" y="311.1" width="1.2" height="1.2"/><rect x="652.7" y="335.3" width="1.2" height="1.2"/><rect x="652.7" y="359.5" width="1.2" height="1.2"/><rect x="652.7" y="383.7" width="1.2" height="1.2"/><rect x="652.7" y="408.0" width="1.2" height="1.2"/><rect x="652.7" y="432.2" width="1.2" height="1.2"/><rect x="652.7" y="456.4" width="1.2" height="1.2"/><rect x="652.7" y="480.6" width="1.2" height="1.2"/><rect x="652.7" y="504.8" width="1.2" height="1.2"/><rect x="652.7" y="529.1" width="1.2" height="1.2"/><rect x="652.7" y="553.3" width="1.2" height="1.2"/><rect x="677.0" y="93.1" width="1.2" height="1.2"/><rect x="677.0" y="117.3" width="1.2" height="1.2"/><rect x="677.0" y="141.5" width="1.2" height="1.2"/><rect x="677.0" y="165.8" width="1.2" height="1.2"/><rect x="677.0" y="190.0" width="1.2" height="1.2"/><rect x="677.0" y="214.2" width="1.2" height="1.2"/><rect x="677.0" y="238.4" width="1.2" height="1.2"/><rect x="677.0" y="262.6" width="1.2" height="1.2"/><rect x="677.0" y="286.9" width="1.2" height="1.2"/><rect x="677.0" y="311.1" width="1.2" height="1.2"/><rect x="677.0" y="335.3" width="1.2" height="1.2"/><rect x="677.0" y="359.5" width="1.2" height="1.2"/><rect x="677.0" y="383.7" width="1.2" height="1.2"/><rect x="677.0" y="408.0" width="1.2" height="1.2"/><rect x="677.0" y="432.2" width="1.2" height="1.2"/><rect x="677.0" y="456.4" width="1.2" height="1.2"/><rect x="677.0" y="480.6" width="1.2" height="1.2"/><rect x="677.0" y="504.8" width="1.2" height="1.2"/><rect x="677.0" y="529.1" width="1.2" height="1.2"/><rect x="677.0" y="553.3" width="1.2" height="1.2"/><rect x="701.2" y="93.1" width="1.2" height="1.2"/><rect x="701.2" y="117.3" width="1.2" height="1.2"/><rect x="701.2" y="141.5" width="1.2" height="1.2"/><rect x="701.2" y="165.8" width="1.2" height="1.2"/><rect x="701.2" y="190.0" width="1.2" height="1.2"/><rect x="701.2" y="214.2" width="1.2" height="1.2"/><rect x="701.2" y="238.4" width="1.2" height="1.2"/><rect x="701.2" y="262.6" width="1.2" height="1.2"/><rect x="701.2" y="286.9" width="1.2" height="1.2"/><rect x="701.2" y="311.1" width="1.2" height="1.2"/><rect x="701.2" y="335.3" width="1.2" height="1.2"/><rect x="701.2" y="359.5" width="1.2" height="1.2"/><rect x="701.2" y="383.7" width="1.2" height="1.2"/><rect x="701.2" y="408.0" width="1.2" height="1.2"/><rect x="701.2" y="432.2" width="1.2" height="1.2"/><rect x="701.2" y="456.4" width="1.2" height="1.2"/><rect x="701.2" y="480.6" width="1.2" height="1.2"/><rect x="701.2" y="504.8" width="1.2" height="1.2"/><rect x="701.2" y="529.1" width="1.2" height="1.2"/><rect x="701.2" y="553.3" width="1.2" height="1.2"/><rect x="725.5" y="93.1" width="1.2" height="1.2"/><rect x="725.5" y="117.3" width="1.2" height="1.2"/><rect x="725.5" y="141.5" width="1.2" height="1.2"/><rect x="725.5" y="165.8" width="1.2" height="1.2"/><rect x="725.5" y="190.0" width="1.2" height="1.2"/><rect x="725.5" y="214.2" width="1.2" height="1.2"/><rect x="725.5" y="238.4" width="1.2" height="1.2"/><rect x="725.5" y="262.6" width="1.2" height="1.2"/><rect x="725.5" y="286.9" width="1.2" height="1.2"/><rect x="725.5" y="311.1" width="1.2" height="1.2"/><rect x="725.5" y="335.3" width="1.2" height="1.2"/><rect x="725.5" y="359.5" width="1.2" height="1.2"/><rect x="725.5" y="383.7" width="1.2" height="1.2"/><rect x="725.5" y="408.0" width="1.2" height="1.2"/><rect x="725.5" y="432.2" width="1.2" height="1.2"/><rect x="725.5" y="456.4" width="1.2" height="1.2"/><rect x="725.5" y="480.6" width="1.2" height="1.2"/><rect x="725.5" y="504.8" width="1.2" height="1.2"/><rect x="725.5" y="529.1" width="1.2" height="1.2"/><rect x="725.5" y="553.3" width="1.2" height="1.2"/><rect x="749.7" y="93.1" width="1.2" height="1.2"/><rect x="749.7" y="117.3" width="1.2" height="1.2"/><rect x="749.7" y="141.5" width="1.2" height="1.2"/><rect x="749.7" y="165.8" width="1.2" height="1.2"/><rect x="749.7" y="190.0" width="1.2" height="1.2"/><rect x="749.7" y="214.2" width="1.2" height="1.2"/><rect x="749.7" y="238.4" width="1.2" height="1.2"/><rect x="749.7" y="262.6" width="1.2" height="1.2"/><rect x="749.7" y="286.9" width="1.2" height="1.2"/><rect x="749.7" y="311.1" width="1.2" height="1.2"/><rect x="749.7" y="335.3" width="1.2" height="1.2"/><rect x="749.7" y="359.5" width="1.2" height="1.2"/><rect x="749.7" y="383.7" width="1.2" height="1.2"/><rect x="749.7" y="408.0" width="1.2" height="1.2"/><rect x="749.7" y="432.2" width="1.2" height="1.2"/><rect x="749.7" y="456.4" width="1.2" height="1.2"/><rect x="749.7" y="480.6" width="1.2" height="1.2"/><rect x="749.7" y="504.8" width="1.2" height="1.2"/><rect x="749.7" y="529.1" width="1.2" height="1.2"/><rect x="749.7" y="553.3" width="1.2" height="1.2"/><rect x="774.0" y="93.1" width="1.2" height="1.2"/><rect x="774.0" y="117.3" width="1.2" height="1.2"/><rect x="774.0" y="141.5" width="1.2" height="1.2"/><rect x="774.0" y="165.8" width="1.2" height="1.2"/><rect x="774.0" y="190.0" width="1.2" height="1.2"/><rect x="774.0" y="214.2" width="1.2" height="1.2"/><rect x="774.0" y="238.4" width="1.2" height="1.2"/><rect x="774.0" y="262.6" width="1.2" height="1.2"/><rect x="774.0" y="286.9" width="1.2" height="1.2"/><rect x="774.0" y="311.1" width="1.2" height="1.2"/><rect x="774.0" y="335.3" width="1.2" height="1.2"/><rect x="774.0" y="359.5" width="1.2" height="1.2"/><rect x="774.0" y="383.7" width="1.2" height="1.2"/><rect x="774.0" y="408.0" width="1.2" height="1.2"/><rect x="774.0" y="432.2" width="1.2" height="1.2"/><rect x="774.0" y="456.4" width="1.2" height="1.2"/><rect x="774.0" y="480.6" width="1.2" height="1.2"/><rect x="774.0" y="504.8" width="1.2" height="1.2"/><rect x="774.0" y="529.1" width="1.2" height="1.2"/><rect x="774.0" y="553.3" width="1.2" height="1.2"/><rect x="798.2" y="93.1" width="1.2" height="1.2"/><rect x="798.2" y="117.3" width="1.2" height="1.2"/><rect x="798.2" y="141.5" width="1.2" height="1.2"/><rect x="798.2" y="165.8" width="1.2" height="1.2"/><rect x="798.2" y="190.0" width="1.2" height="1.2"/><rect x="798.2" y="214.2" width="1.2" height="1.2"/><rect x="798.2" y="238.4" width="1.2" height="1.2"/><rect x="798.2" y="262.6" width="1.2" height="1.2"/><rect x="798.2" y="286.9" width="1.2" height="1.2"/><rect x="798.2" y="311.1" width="1.2" height="1.2"/><rect x="798.2" y="335.3" width="1.2" height="1.2"/><rect x="798.2" y="359.5" width="1.2" height="1.2"/><rect x="798.2" y="383.7" width="1.2" height="1.2"/><rect x="798.2" y="408.0" width="1.2" height="1.2"/><rect x="798.2" y="432.2" width="1.2" height="1.2"/><rect x="798.2" y="456.4" width="1.2" height="1.2"/><rect x="798.2" y="480.6" width="1.2" height="1.2"/><rect x="798.2" y="504.8" width="1.2" height="1.2"/><rect x="798.2" y="529.1" width="1.2" height="1.2"/><rect x="798.2" y="553.3" width="1.2" height="1.2"/><rect x="822.5" y="93.1" width="1.2" height="1.2"/><rect x="822.5" y="117.3" width="1.2" height="1.2"/><rect x="822.5" y="141.5" width="1.2" height="1.2"/><rect x="822.5" y="165.8" width="1.2" height="1.2"/><rect x="822.5" y="190.0" width="1.2" height="1.2"/><rect x="822.5" y="214.2" width="1.2" height="1.2"/><rect x="822.5" y="238.4" width="1.2" height="1.2"/><rect x="822.5" y="262.6" width="1.2" height="1.2"/><rect x="822.5" y="286.9" width="1.2" height="1.2"/><rect x="822.5" y="311.1" width="1.2" height="1.2"/><rect x="822.5" y="335.3" width="1.2" height="1.2"/><rect x="822.5" y="359.5" width="1.2" height="1.2"/><rect x="822.5" y="383.7" width="1.2" height="1.2"/><rect x="822.5" y="408.0" width="1.2" height="1.2"/><rect x="822.5" y="432.2" width="1.2" height="1.2"/><rect x="822.5" y="456.4" width="1.2" height="1.2"/><rect x="822.5" y="480.6" width="1.2" height="1.2"/><rect x="822.5" y="504.8" width="1.2" height="1.2"/><rect x="822.5" y="529.1" width="1.2" height="1.2"/><rect x="822.5" y="553.3" width="1.2" height="1.2"/><rect x="846.7" y="93.1" width="1.2" height="1.2"/><rect x="846.7" y="117.3" width="1.2" height="1.2"/><rect x="846.7" y="141.5" width="1.2" height="1.2"/><rect x="846.7" y="165.8" width="1.2" height="1.2"/><rect x="846.7" y="190.0" width="1.2" height="1.2"/><rect x="846.7" y="214.2" width="1.2" height="1.2"/><rect x="846.7" y="238.4" width="1.2" height="1.2"/><rect x="846.7" y="262.6" width="1.2" height="1.2"/><rect x="846.7" y="286.9" width="1.2" height="1.2"/><rect x="846.7" y="311.1" width="1.2" height="1.2"/><rect x="846.7" y="335.3" width="1.2" height="1.2"/><rect x="846.7" y="359.5" width="1.2" height="1.2"/><rect x="846.7" y="383.7" width="1.2" height="1.2"/><rect x="846.7" y="408.0" width="1.2" height="1.2"/><rect x="846.7" y="432.2" width="1.2" height="1.2"/><rect x="846.7" y="456.4" width="1.2" height="1.2"/><rect x="846.7" y="480.6" width="1.2" height="1.2"/><rect x="846.7" y="504.8" width="1.2" height="1.2"/><rect x="846.7" y="529.1" width="1.2" height="1.2"/><rect x="846.7" y="553.3" width="1.2" height="1.2"/><rect x="871.0" y="93.1" width="1.2" height="1.2"/><rect x="871.0" y="117.3" width="1.2" height="1.2"/><rect x="871.0" y="141.5" width="1.2" height="1.2"/><rect x="871.0" y="165.8" width="1.2" height="1.2"/><rect x="871.0" y="190.0" width="1.2" height="1.2"/><rect x="871.0" y="214.2" width="1.2" height="1.2"/><rect x="871.0" y="238.4" width="1.2" height="1.2"/><rect x="871.0" y="262.6" width="1.2" height="1.2"/><rect x="871.0" y="286.9" width="1.2" height="1.2"/><rect x="871.0" y="311.1" width="1.2" height="1.2"/><rect x="871.0" y="335.3" width="1.2" height="1.2"/><rect x="871.0" y="359.5" width="1.2" height="1.2"/><rect x="871.0" y="383.7" width="1.2" height="1.2"/><rect x="871.0" y="408.0" width="1.2" height="1.2"/><rect x="871.0" y="432.2" width="1.2" height="1.2"/><rect x="871.0" y="456.4" width="1.2" height="1.2"/><rect x="871.0" y="480.6" width="1.2" height="1.2"/><rect x="871.0" y="504.8" width="1.2" height="1.2"/><rect x="871.0" y="529.1" width="1.2" height="1.2"/><rect x="871.0" y="553.3" width="1.2" height="1.2"/></g><path d="M119.5 78V562" stroke="#3e4858" stroke-width="1"/><path d="M168.5 78V562M178 78.5V562M178 78.6H871M168.5 552H178" stroke="#905094" stroke-width="1" fill="none"/><path d="M483.5 79V102M460 95.5H506" stroke="#6a6e7a" stroke-width="1"/><path d="M211.5 505V562M667.5 505V562" stroke="#1a2434" stroke-width="1"/></svg>
<div class="a" style="left:1.5px;top:79.5px;width:17px;height:17.5px;background:#13223a;border:1px solid #36506e;border-radius:2px"></div>
<svg class="a" style="left:3px;top:81px" width="14" height="14" viewBox="0 0 14 14"><rect x="1.0" y="1.0" width="1.8" height="1.8" fill="#e6e0ea"/><rect x="1.0" y="4.6" width="1.8" height="1.8" fill="#e6e0ea"/><rect x="1.0" y="8.2" width="1.8" height="1.8" fill="#e6e0ea"/><rect x="1.0" y="11.8" width="1.8" height="1.8" fill="#e6e0ea"/><rect x="4.6" y="1.0" width="1.8" height="1.8" fill="#e6e0ea"/><rect x="4.6" y="4.6" width="1.8" height="1.8" fill="#e6e0ea"/><rect x="4.6" y="8.2" width="1.8" height="1.8" fill="#e6e0ea"/><rect x="4.6" y="11.8" width="1.8" height="1.8" fill="#e6e0ea"/><rect x="8.2" y="1.0" width="1.8" height="1.8" fill="#e6e0ea"/><rect x="8.2" y="4.6" width="1.8" height="1.8" fill="#e6e0ea"/><rect x="8.2" y="8.2" width="1.8" height="1.8" fill="#e6e0ea"/><rect x="8.2" y="11.8" width="1.8" height="1.8" fill="#e6e0ea"/><rect x="11.8" y="1.0" width="1.8" height="1.8" fill="#e6e0ea"/><rect x="11.8" y="4.6" width="1.8" height="1.8" fill="#e6e0ea"/><rect x="11.8" y="8.2" width="1.8" height="1.8" fill="#e6e0ea"/><rect x="11.8" y="11.8" width="1.8" height="1.8" fill="#e6e0ea"/></svg>
<svg class="a" style="left:3px;top:100px" width="14" height="15" viewBox="0 0 14 15"><rect x="1.0" y="1.0" width="1.4" height="1.4" fill="#888"/><rect x="1.0" y="4.6" width="1.4" height="1.4" fill="#888"/><rect x="1.0" y="8.2" width="1.4" height="1.4" fill="#888"/><rect x="1.0" y="11.8" width="1.4" height="1.4" fill="#888"/><rect x="4.6" y="1.0" width="1.4" height="1.4" fill="#888"/><rect x="4.6" y="4.6" width="1.4" height="1.4" fill="#888"/><rect x="4.6" y="8.2" width="1.4" height="1.4" fill="#888"/><rect x="4.6" y="11.8" width="1.4" height="1.4" fill="#888"/><rect x="8.2" y="1.0" width="1.4" height="1.4" fill="#888"/><rect x="8.2" y="4.6" width="1.4" height="1.4" fill="#888"/><rect x="8.2" y="8.2" width="1.4" height="1.4" fill="#888"/><rect x="8.2" y="11.8" width="1.4" height="1.4" fill="#888"/><rect x="11.8" y="1.0" width="1.4" height="1.4" fill="#888"/><rect x="11.8" y="4.6" width="1.4" height="1.4" fill="#888"/><rect x="11.8" y="8.2" width="1.4" height="1.4" fill="#888"/><rect x="11.8" y="11.8" width="1.4" height="1.4" fill="#888"/><path d="M4 7V5a3 3 0 0 1 6 0v2" stroke="#e0607a" stroke-width="1.6" fill="none"/><rect x="2" y="7" width="10" height="7.5" rx="1" fill="#e0607a"/></svg>
<svg class="a" style="left:3px;top:119px" width="14" height="15" viewBox="0 0 14 15"><path d="M1 1v13h13" stroke="#e0d8e2" stroke-width="1.2" fill="none"/><path d="M1 14L12 3" stroke="#e0d8e2" stroke-width="1"/><circle cx="12" cy="3" r="1.5" fill="#e0607a"/><text x="3" y="7" font-size="5" fill="#e0d8e2">r</text><path d="M7 9a3 3 0 0 1 2 3" stroke="#e0d8e2" fill="none" stroke-width=".8"/></svg>
<svg class="a" style="left:3px;top:140px" width="14" height="13" viewBox="0 0 14 13"><text x="7" y="6.5" font-size="7" text-anchor="middle" fill="#e0d8e2" font-family="Liberation Sans">in</text><path d="M1 10h12M3 8l-2 2 2 2M11 8l2 2-2 2" stroke="#e0d8e2" stroke-width="1" fill="none"/></svg>
<svg class="a" style="left:3px;top:160px" width="14" height="13" viewBox="0 0 14 13"><text x="7" y="6.5" font-size="6.5" text-anchor="middle" fill="#e0d8e2" font-family="Liberation Sans">mil</text><path d="M1 10h12M3 8l-2 2 2 2M11 8l2 2-2 2" stroke="#e0d8e2" stroke-width="1" fill="none"/></svg>
<div class="a" style="left:1.5px;top:177px;width:17px;height:17px;background:#13223a;border:1px solid #36506e;border-radius:2px"></div>
<svg class="a" style="left:3px;top:179px" width="14" height="13" viewBox="0 0 14 13"><text x="7" y="6.5" font-size="6.5" text-anchor="middle" fill="#e0d8e2" font-family="Liberation Sans">mm</text><path d="M1 10h12M3 8l-2 2 2 2M11 8l2 2-2 2" stroke="#e0d8e2" stroke-width="1" fill="none"/></svg>
<svg class="a" style="left:3px;top:197px" width="14" height="15" viewBox="0 0 14 15"><path d="M7 1v13M1 7h13" stroke="#4aa8e6" stroke-width="1.2"/><circle cx="7" cy="7" r="2" fill="#4aa8e6"/><path d="M8 8l4.5 2-2 .7 1.8 2-1 .6-1.6-2L8.5 12.5z" fill="#e0d8e2"/></svg>
<div class="a" style="left:3px;top:214.5px;width:14px;height:1px;background:#444"></div>
<svg class="a" style="left:3px;top:217px" width="14" height="14" viewBox="0 0 14 14"><path d="M1 1v13h13" stroke="#e0d8e2" stroke-width="1.2" fill="none"/><path d="M1 14L12 4" stroke="#e0d8e2" stroke-width="1"/><path d="M4 10a3 3 0 0 1 3 3" stroke="#e0d8e2" fill="none" stroke-width=".8"/></svg>
<div class="a" style="left:3px;top:234.5px;width:14px;height:1px;background:#444"></div>
<div class="a" style="left:1.5px;top:233px;width:17px;height:17px;background:#13223a;border:1px solid #36506e;border-radius:2px"></div>
<svg class="a" style="left:3px;top:235px" width="14" height="14" viewBox="0 0 14 14"><path d="M2 2l5 5-5 5M12 2L7 7l5 5" stroke="#e0d8e2" stroke-width="1" fill="none"/><circle cx="2.5" cy="2.5" r="1.6" fill="#e0d8e2"/><circle cx="11.5" cy="2.5" r="1.6" fill="#e0d8e2"/><circle cx="2.5" cy="11.5" r="1.6" fill="#e0d8e2"/><circle cx="11.5" cy="11.5" r="1.6" fill="#e0d8e2"/><circle cx="7" cy="7" r="1.6" fill="#e0d8e2"/></svg>
<svg class="a" style="left:3px;top:252px" width="14" height="15" viewBox="0 0 14 15"><path d="M1 14L13 1" stroke="#e0d8e2" stroke-width="1"/><path d="M3 9a5 5 0 0 1 8-5M4 12a5 5 0 0 0 8-5" stroke="#e0d8e2" stroke-width="1" fill="none"/><circle cx="3" cy="9" r="1.5" fill="#e0d8e2"/><circle cx="11" cy="4" r="1.5" fill="#e0d8e2"/><circle cx="4" cy="12" r="1.5" fill="#e0d8e2"/></svg>
<div class="a" style="left:3px;top:276.5px;width:14px;height:1px;background:#444"></div>
<div class="a" style="left:1.5px;top:281px;width:17px;height:17px;background:#13223a;border:1px solid #36506e;border-radius:2px"></div>
<svg class="a" style="left:3px;top:283px" width="14" height="14" viewBox="0 0 14 14"><path d="M1 2h4l3 3h5M1 6h3l3 3h6M1 10h2l3 3h7" stroke="#e0607a" stroke-width="1.1" fill="none"/><path d="M0 4h5l3 3h6" stroke="#e0d8e2" stroke-width="1" fill="none"/><circle cx="5" cy="8" r="2" fill="#f0a030"/><path d="M1 13L13 1" stroke="#e0d8e2" stroke-width="1"/></svg>
<svg class="a" style="left:3px;top:302px" width="14" height="15" viewBox="0 0 14 15"><path d="M2 14V7a4 4 0 0 1 8 0v7M5 14V8a2 2 0 0 1 3 0" stroke="#9a7a6a" stroke-width="1.2" fill="none"/><circle cx="5" cy="9" r="1.5" fill="#e0607a"/><path d="M6 9h8M11 6v8" stroke="#4aa8e6" stroke-width="1.4"/></svg>
<div class="a" style="left:3px;top:319.5px;width:14px;height:1px;background:#444"></div>
<div class="a" style="left:1.5px;top:324px;width:17px;height:16px;background:#13223a;border:1px solid #36506e;border-radius:2px"></div>
<svg class="a" style="left:3px;top:325.5px" width="14" height="14" viewBox="0 0 14 14"><rect x="1" y="3" width="8" height="10" fill="#4aa8e6"/><rect x="6" y="6" width="7" height="7" fill="#4aa8e6"/><circle cx="9" cy="8" r="2" fill="#13223a"/><path d="M9 8h4" stroke="#fff" stroke-width="1"/></svg>
<svg class="a" style="left:3px;top:342px" width="14" height="15" viewBox="0 0 14 15"><rect x="1" y="3" width="12" height="10" fill="none" stroke="#4aa8e6" stroke-dasharray="1.5 1"/><path d="M7 8h5" stroke="#e0d8e2" stroke-width="1"/><rect x="10" y="6" width="3" height="4" fill="#e0d8e2"/></svg>
<div class="a" style="left:3px;top:362.5px;width:14px;height:1px;background:#444"></div>
<svg class="a" style="left:3px;top:366.5px" width="14" height="14" viewBox="0 0 14 14"><rect x="1" y="1" width="12" height="12" fill="none" stroke="#4aa8e6" stroke-width="1"/><circle cx="3.5" cy="3" r="1.3" fill="#4aa8e6"/><circle cx="7" cy="3" r="1.3" fill="#4aa8e6"/><circle cx="10.5" cy="3" r="1.3" fill="#4aa8e6"/><circle cx="3.5" cy="11" r="1.3" fill="none" stroke="#e0d8e2"/><circle cx="7" cy="11" r="1.3" fill="none" stroke="#e0d8e2"/><circle cx="10.5" cy="11" r="1.3" fill="none" stroke="#e0d8e2"/><path d="M1 13L13 1" stroke="#e0d8e2" stroke-width="1"/></svg>
<svg class="a" style="left:3px;top:386px" width="14" height="14" viewBox="0 0 14 14"><circle cx="7" cy="7" r="5.5" fill="none" stroke="#f0a030" stroke-width="3"/><path d="M1 13L13 1" stroke="#e0d8e2" stroke-width="1"/></svg>
<svg class="a" style="left:3px;top:404px" width="14" height="14" viewBox="0 0 14 14"><path d="M7 0v14" stroke="#e0607a" stroke-width="2"/><path d="M0 8h14" stroke="#4aa8e6" stroke-width="2"/><path d="M1 13L13 1" stroke="#e0d8e2" stroke-width="1"/></svg>
<div class="a" style="left:3px;top:423px;width:14px;height:1px;background:#444"></div>
<div class="a" style="left:1.5px;top:426px;width:17px;height:17px;background:#13223a;border:1px solid #36506e;border-radius:2px"></div>
<svg class="a" style="left:3px;top:427.5px" width="14" height="14" viewBox="0 0 14 14"><path d="M7 6l6 3-6 3-6-3z" fill="#f0a030"/><path d="M7 1l6 3.5-6 3.5-6-3.5z" fill="#4aa8e6"/><path d="M1 4.5l6 3.5v3.5L1 8z" fill="#3a88c6"/><path d="M13 4.5L7 8v3.5L13 8z" fill="#7ac4f0"/></svg>
<svg class="a" style="left:3px;top:446.5px" width="14" height="14" viewBox="0 0 14 14"><path d="M2 13L11 4" stroke="#4aa8e6" stroke-width="2"/><circle cx="11" cy="3" r="2.5" fill="none" stroke="#4aa8e6" stroke-width="1.6"/><path d="M13 13L4 4" stroke="#e0d8e2" stroke-width="1.6"/><path d="M1 1l3 1 -1 2z" fill="#e0d8e2"/></svg>
<div class="a" style="left:2px;top:562px;width:995.5px;height:34px;background:#2e2e2e;border-radius:0 0 9px 9px"></div>
<div class="a" style="left:2px;top:581px;width:995.5px;height:1px;background:#232323"></div>
<div class="t" style="left:6.5px;top:563.2px;font-size:7px;color:#7a7a7a;">焊盤</div>
<div class="t" style="left:6.5px;top:572.3px;font-size:7px;color:#7a7a7a;">43</div>
<div class="t" style="left:33px;top:563.2px;font-size:7px;color:#7a7a7a;">貫孔</div>
<div class="t" style="left:33px;top:572.3px;font-size:7px;color:#7a7a7a;">0</div>
<div class="t" style="left:62.5px;top:563.2px;font-size:7px;color:#7a7a7a;">走線段</div>
<div class="t" style="left:62.5px;top:572.3px;font-size:7px;color:#7a7a7a;">69</div>
<div class="t" style="left:99px;top:563.2px;font-size:7px;color:#7a7a7a;">網路</div>
<div class="t" style="left:99px;top:572.3px;font-size:7px;color:#7a7a7a;">19</div>
<div class="t" style="left:124px;top:563.2px;font-size:7px;color:#7a7a7a;">未佈線</div>
<div class="t" style="left:124px;top:572.3px;font-size:7px;color:#7a7a7a;">0</div>
<div class="t" style="left:317px;top:584px;font-size:7px;color:#7e7e7e;">Z 2.34</div>
<div class="t" style="left:359px;top:584px;font-size:6.8px;color:#7e7e7e;">X 75.0000&nbsp;&nbsp;Y 15.5000</div>
<div class="t" style="left:449.5px;top:584px;font-size:6.95px;color:#7e7e7e;">dx 75.0000&nbsp;&nbsp;dy 15.5000&nbsp;&nbsp;dist 76.5849</div>
<div class="t" style="left:595px;top:584px;font-size:7px;color:#7e7e7e;">網格 0.5000</div>
<div class="t" style="left:700px;top:584px;font-size:7px;color:#7e7e7e;">mm</div>
<div class="t" style="left:751px;top:584px;font-size:7px;color:#7e7e7e;">佈線(單端)</div>
<div class="a" style="left:871.5px;top:77px;width:21.5px;height:485px;background:#323232"></div>
<svg class="a" style="left:878.5px;top:84px" width="7" height="10" viewBox="0 0 7 10"><path d="M0.5 0.5v9l2.3-2.2 1.6 3 1.3-.6-1.5-3H7z" fill="#e6e0ea"/></svg>
<svg class="a" style="left:876px;top:100.5px" width="14" height="15" viewBox="0 0 14 15"><path d="M1 1l12 13M13 1L1 14" stroke="#e0d8e2" stroke-width="1"/><circle cx="7" cy="7.5" r="1.8" fill="#fff"/></svg>
<div class="a" style="left:875px;top:119px;width:15px;height:1px;background:#444"></div>
<svg class="a" style="left:875px;top:124px" width="15" height="14" viewBox="0 0 15 14"><path d="M1 3v8M14 3v8" stroke="#bbb" stroke-width="1"/><rect x="2.5" y="1" width="2.6" height="2.6" fill="#4aa8e6"/><rect x="2.5" y="10.5" width="2.6" height="2.6" fill="#4aa8e6"/><rect x="6.0" y="1" width="2.6" height="2.6" fill="#4aa8e6"/><rect x="6.0" y="10.5" width="2.6" height="2.6" fill="#4aa8e6"/><rect x="9.5" y="1" width="2.6" height="2.6" fill="#4aa8e6"/><rect x="9.5" y="10.5" width="2.6" height="2.6" fill="#4aa8e6"/></svg>
<div class="a" style="left:873.8px;top:141.8px;width:17px;height:16.7px;background:#13223a;border:1px solid #36506e;border-radius:2px"></div>
<svg class="a" style="left:875.5px;top:143.5px" width="14" height="14" viewBox="0 0 14 14"><path d="M1 12h3l5-8h4" stroke="#4aa8e6" stroke-width="1.4" fill="none"/><path d="M14 10v4h-4z" fill="#ddd"/></svg>
<svg class="a" style="left:875.5px;top:162px" width="14" height="15" viewBox="0 0 14 15"><path d="M0.5 8c1.5 0 1.2-5 2.6-5s1.2 7 2.6 7 1.2-7 2.6-7 1.2 7 2.6 7 1.2-2 2.3-2" stroke="#4aa8e6" stroke-width="1.3" fill="none"/><path d="M14.5 11v4h-4z" fill="#ddd"/></svg>
<svg class="a" style="left:877px;top:183px" width="10" height="10" viewBox="0 0 10 10"><circle cx="5" cy="5" r="4.5" fill="#e8902a"/><circle cx="5" cy="5" r="2" fill="#f4d0a0"/></svg>
<svg class="a" style="left:876px;top:199px" width="14" height="13" viewBox="0 0 14 13"><rect x="1" y="0.5" width="7" height="12" fill="#4aa8e6"/><rect x="4" y="5" width="10" height="7.5" fill="#4aa8e6"/><circle cx="9" cy="7.5" r="1.8" fill="#323232"/><path d="M9 7.5h5" stroke="#fff" stroke-width="1"/></svg>
<svg class="a" style="left:876px;top:218px" width="14" height="13" viewBox="0 0 14 13"><rect x="0.5" y="0.5" width="13" height="12" fill="#999"/><path d="M0.5 5L5 0.5M0.5 10L10 0.5M3 12.5L13.5 2M8 12.5L13.5 7" stroke="#323232" stroke-width="1.4"/></svg>
<div class="a" style="left:875px;top:235px;width:15px;height:1px;background:#444"></div>
<svg class="a" style="left:876px;top:241px" width="14" height="12" viewBox="0 0 14 12"><path d="M1 11.5L13 .5" stroke="#a8a8a8" stroke-width="1.3"/></svg>
<svg class="a" style="left:876px;top:259.5px" width="14" height="13" viewBox="0 0 14 13"><path d="M1 13C1 6 5 1.5 12 1" stroke="#a8a8a8" stroke-width="1.3" fill="none"/></svg>
<svg class="a" style="left:876px;top:279px" width="14" height="11" viewBox="0 0 14 11"><rect x="0.5" y="0.5" width="13" height="10" fill="#888" stroke="#aaa"/></svg>
<svg class="a" style="left:876px;top:298px" width="14" height="12" viewBox="0 0 14 12"><circle cx="7" cy="6" r="5.6" fill="#888" stroke="#aaa"/></svg>
<svg class="a" style="left:876px;top:315px" width="14" height="13" viewBox="0 0 14 13"><path d="M0.5 1L13.5 4 11 12.5 1 12z" fill="#999"/><path d="M1 1l6 5.5L1 12" fill="#323232"/></svg>
<svg class="a" style="left:876px;top:334px" width="14" height="13" viewBox="0 0 14 13"><rect x="0.5" y="0.5" width="13" height="12" rx="1" fill="#aaa"/><rect x="2" y="2" width="10" height="9" fill="#555"/><path d="M2 11l3.5-5 3 3 1.5-2 2 4z" fill="#aaa"/><circle cx="9" cy="4.5" r="1" fill="#aaa"/></svg>
<svg class="a" style="left:877px;top:352.5px" width="12" height="13" viewBox="0 0 12 13"><path d="M0 1.5h12M6 1.5V13" stroke="#a8a8a8" stroke-width="2.2"/></svg>
<svg class="a" style="left:876px;top:372px" width="14" height="11" viewBox="0 0 14 11"><rect x="0.5" y="0.5" width="13" height="10" fill="#777" stroke="#aaa"/><path d="M3 3.5h8M3 5.5h8M3 7.5h8" stroke="#aaa" stroke-width=".9"/></svg>
<svg class="a" style="left:876px;top:388px" width="15" height="17" viewBox="0 0 15 17"><path d="M1.5 8.5L7 2l5.5 3.5" stroke="#bbb" stroke-width="1" fill="none"/><circle cx="2.5" cy="10" r="1.8" fill="#4aa8e6"/><circle cx="12" cy="5.5" r="1.8" fill="#4aa8e6"/><path d="M15 12v5h-5z" fill="#ddd"/></svg>
<svg class="a" style="left:876px;top:407.5px" width="15" height="14" viewBox="0 0 15 14"><path d="M0.5 0.5v11l2.8-2.7 2 3.6 1.5-.7-1.9-3.6H8z" fill="#999"/><circle cx="10.3" cy="9.7" r="4" fill="#d8485a"/><path d="M8.6 8l3.4 3.4M12 8l-3.4 3.4" stroke="#fff" stroke-width="1.1"/></svg>
<div class="a" style="left:875px;top:426px;width:15px;height:1px;background:#444"></div>
<svg class="a" style="left:875px;top:430.5px" width="15" height="16" viewBox="0 0 15 16"><rect x="1" y="1" width="1.4" height="1.4" fill="#bbb"/><rect x="1" y="5" width="1.4" height="1.4" fill="#bbb"/><rect x="1" y="9" width="1.4" height="1.4" fill="#bbb"/><rect x="1" y="13" width="1.4" height="1.4" fill="#bbb"/><rect x="5" y="1" width="1.4" height="1.4" fill="#bbb"/><rect x="5" y="5" width="1.4" height="1.4" fill="#bbb"/><rect x="5" y="9" width="1.4" height="1.4" fill="#bbb"/><rect x="5" y="13" width="1.4" height="1.4" fill="#bbb"/><rect x="9" y="1" width="1.4" height="1.4" fill="#bbb"/><rect x="9" y="5" width="1.4" height="1.4" fill="#bbb"/><rect x="9" y="9" width="1.4" height="1.4" fill="#bbb"/><rect x="9" y="13" width="1.4" height="1.4" fill="#bbb"/><rect x="13" y="1" width="1.4" height="1.4" fill="#bbb"/><rect x="13" y="5" width="1.4" height="1.4" fill="#bbb"/><rect x="13" y="9" width="1.4" height="1.4" fill="#bbb"/><rect x="13" y="13" width="1.4" height="1.4" fill="#bbb"/><path d="M0 9h10M5 4v10" stroke="#4aa8e6" stroke-width="1"/><path d="M15 11v5h-5z" fill="#ddd"/></svg>
<svg class="a" style="left:876px;top:450px" width="14" height="12" viewBox="0 0 14 12"><path d="M1.5 9L9.5 1 13 4.5 5 12.5z" fill="none" stroke="#ddd" stroke-width="1.3"/><path d="M4 8l1 1M6 6l1.5 1.5M8 4l1 1" stroke="#ddd" stroke-width=".8"/></svg>
<div class="a" style="left:893px;top:77px;width:104.5px;height:504px;background:#2d2d2d"></div>
<div class="a" style="left:896px;top:77px;width:101.5px;height:10.5px;background:#1f1f1f"></div>
<div class="t" style="left:898px;top:77px;font-size:7.2px;color:#ddd;">外觀</div>
<div class="a" style="left:896px;top:100.5px;width:101.5px;height:335.5px;background:#2f2f2f;border:1px solid #3d3d3d;border-right:none;border-radius:4px 0 0 4px"></div>
<div class="a" style="left:912px;top:95px;width:73px;height:12px;background:#3a3a3a;border-radius:4px"></div>
<div class="a" style="left:913px;top:95.5px;width:19px;height:11px;background:#5e5e5e;border-radius:3px"></div>
<div class="t" style="left:919px;top:95.8px;font-size:7px;color:#eee;">層</div>
<div class="t" style="left:938.4px;top:95.8px;font-size:7px;color:#ddd;">物件</div>
<div class="a" style="left:957px;top:97px;width:1px;height:8px;background:#4a4a4a"></div>
<div class="t" style="left:963.6px;top:95.8px;font-size:7px;color:#ddd;">網路</div>
<div class="a" style="left:908px;top:112.7px;width:9.5px;height:7.2px;background:#c83434"></div>
<svg class="a" style="left:921.5px;top:113.8px" width="8" height="5" viewBox="0 0 8 5"><path d="M.6 2.5C1.7 1 2.8.4 4 .4s2.3.6 3.4 2.1C6.3 4 5.2 4.6 4 4.6S1.7 4 .6 2.5z" fill="#d0d0d0"/><circle cx="4" cy="2.5" r="1.2" fill="#2f2f2f"/></svg>
<div class="t" style="left:933px;top:111.8px;font-size:7.15px;color:#e2e2e2;">F.Cu</div>
<div class="a" style="left:898px;top:121.7px;width:100px;height:10.4px;background:#3c3c3c"></div>
<svg class="a" style="left:901px;top:123.7px" width="4" height="6" viewBox="0 0 4 6"><path d="M0 0l4 3-4 3z" fill="#3030ff"/></svg>
<div class="a" style="left:908px;top:123.10000000000001px;width:9.5px;height:7.2px;background:#4d7fc4"></div>
<svg class="a" style="left:921.5px;top:124.2px" width="8" height="5" viewBox="0 0 8 5"><path d="M.6 2.5C1.7 1 2.8.4 4 .4s2.3.6 3.4 2.1C6.3 4 5.2 4.6 4 4.6S1.7 4 .6 2.5z" fill="#d0d0d0"/><circle cx="4" cy="2.5" r="1.2" fill="#2f2f2f"/></svg>
<div class="t" style="left:933px;top:122.2px;font-size:7.15px;color:#e2e2e2;">B.Cu</div>
<div class="a" style="left:908px;top:133.5px;width:9.5px;height:7.2px;background:#84008a"></div>
<svg class="a" style="left:921.5px;top:134.6px" width="8" height="5" viewBox="0 0 8 5"><path d="M.6 2.5C1.7 1 2.8.4 4 .4s2.3.6 3.4 2.1C6.3 4 5.2 4.6 4 4.6S1.7 4 .6 2.5z" fill="#d0d0d0"/><circle cx="4" cy="2.5" r="1.2" fill="#2f2f2f"/></svg>
<div class="t" style="left:933px;top:132.6px;font-size:7.15px;color:#e2e2e2;">F.Adhesive</div>
<div class="a" style="left:908px;top:143.9px;width:9.5px;height:7.2px;background:#000084"></div>
<svg class="a" style="left:921.5px;top:145.0px" width="8" height="5" viewBox="0 0 8 5"><path d="M.6 2.5C1.7 1 2.8.4 4 .4s2.3.6 3.4 2.1C6.3 4 5.2 4.6 4 4.6S1.7 4 .6 2.5z" fill="#d0d0d0"/><circle cx="4" cy="2.5" r="1.2" fill="#2f2f2f"/></svg>
<div class="t" style="left:933px;top:143.0px;font-size:7.15px;color:#e2e2e2;">B.Adhesive</div>
<div class="a" style="left:908px;top:154.3px;width:9.5px;height:7.2px;background:#a89a94"></div>
<svg class="a" style="left:921.5px;top:155.4px" width="8" height="5" viewBox="0 0 8 5"><path d="M.6 2.5C1.7 1 2.8.4 4 .4s2.3.6 3.4 2.1C6.3 4 5.2 4.6 4 4.6S1.7 4 .6 2.5z" fill="#d0d0d0"/><circle cx="4" cy="2.5" r="1.2" fill="#2f2f2f"/></svg>
<div class="t" style="left:933px;top:153.4px;font-size:7.15px;color:#e2e2e2;">F.Paste</div>
<div class="a" style="left:908px;top:164.70000000000002px;width:9.5px;height:7.2px;background:#3aa6a6"></div>
<svg class="a" style="left:921.5px;top:165.8px" width="8" height="5" viewBox="0 0 8 5"><path d="M.6 2.5C1.7 1 2.8.4 4 .4s2.3.6 3.4 2.1C6.3 4 5.2 4.6 4 4.6S1.7 4 .6 2.5z" fill="#d0d0d0"/><circle cx="4" cy="2.5" r="1.2" fill="#2f2f2f"/></svg>
<div class="t" style="left:933px;top:163.8px;font-size:7.15px;color:#e2e2e2;">B.Paste</div>
<div class="a" style="left:908px;top:175.1px;width:9.5px;height:7.2px;background:#f2eda1"></div>
<svg class="a" style="left:921.5px;top:176.2px" width="8" height="5" viewBox="0 0 8 5"><path d="M.6 2.5C1.7 1 2.8.4 4 .4s2.3.6 3.4 2.1C6.3 4 5.2 4.6 4 4.6S1.7 4 .6 2.5z" fill="#d0d0d0"/><circle cx="4" cy="2.5" r="1.2" fill="#2f2f2f"/></svg>
<div class="t" style="left:933px;top:174.2px;font-size:7.15px;color:#e2e2e2;">F.Silkscreen</div>
<div class="a" style="left:908px;top:185.5px;width:9.5px;height:7.2px;background:#e8b2a7"></div>
<svg class="a" style="left:921.5px;top:186.6px" width="8" height="5" viewBox="0 0 8 5"><path d="M.6 2.5C1.7 1 2.8.4 4 .4s2.3.6 3.4 2.1C6.3 4 5.2 4.6 4 4.6S1.7 4 .6 2.5z" fill="#d0d0d0"/><circle cx="4" cy="2.5" r="1.2" fill="#2f2f2f"/></svg>
<div class="t" style="left:933px;top:184.6px;font-size:7.15px;color:#e2e2e2;">B.Silkscreen</div>
<div class="a" style="left:908px;top:195.9px;width:9.5px;height:7.2px;background:repeating-conic-gradient(#7a3a7a 0 25%,#4e2a5a 0 50%) 0 0/4px 4px"></div>
<svg class="a" style="left:921.5px;top:197.0px" width="8" height="5" viewBox="0 0 8 5"><path d="M.6 2.5C1.7 1 2.8.4 4 .4s2.3.6 3.4 2.1C6.3 4 5.2 4.6 4 4.6S1.7 4 .6 2.5z" fill="#d0d0d0"/><circle cx="4" cy="2.5" r="1.2" fill="#2f2f2f"/></svg>
<div class="t" style="left:933px;top:195.0px;font-size:7.15px;color:#e2e2e2;">F.Mask</div>
<div class="a" style="left:908px;top:206.3px;width:9.5px;height:7.2px;background:repeating-conic-gradient(#2e6a5e 0 25%,#1e4a44 0 50%) 0 0/4px 4px"></div>
<svg class="a" style="left:921.5px;top:207.4px" width="8" height="5" viewBox="0 0 8 5"><path d="M.6 2.5C1.7 1 2.8.4 4 .4s2.3.6 3.4 2.1C6.3 4 5.2 4.6 4 4.6S1.7 4 .6 2.5z" fill="#d0d0d0"/><circle cx="4" cy="2.5" r="1.2" fill="#2f2f2f"/></svg>
<div class="t" style="left:933px;top:205.4px;font-size:7.15px;color:#e2e2e2;">B.Mask</div>
<div class="a" style="left:908px;top:216.70000000000002px;width:9.5px;height:7.2px;background:#c2c2c2"></div>
<svg class="a" style="left:921.5px;top:217.8px" width="8" height="5" viewBox="0 0 8 5"><path d="M.6 2.5C1.7 1 2.8.4 4 .4s2.3.6 3.4 2.1C6.3 4 5.2 4.6 4 4.6S1.7 4 .6 2.5z" fill="#d0d0d0"/><circle cx="4" cy="2.5" r="1.2" fill="#2f2f2f"/></svg>
<div class="t" style="left:933px;top:215.8px;font-size:7.15px;color:#e2e2e2;">User.Drawings</div>
<div class="a" style="left:908px;top:227.1px;width:9.5px;height:7.2px;background:#5989db"></div>
<svg class="a" style="left:921.5px;top:228.2px" width="8" height="5" viewBox="0 0 8 5"><path d="M.6 2.5C1.7 1 2.8.4 4 .4s2.3.6 3.4 2.1C6.3 4 5.2 4.6 4 4.6S1.7 4 .6 2.5z" fill="#d0d0d0"/><circle cx="4" cy="2.5" r="1.2" fill="#2f2f2f"/></svg>
<div class="t" style="left:933px;top:226.2px;font-size:7.15px;color:#e2e2e2;">User.Comments</div>
<div class="a" style="left:908px;top:237.50000000000003px;width:9.5px;height:7.2px;background:#b4dbd2"></div>
<svg class="a" style="left:921.5px;top:238.60000000000002px" width="8" height="5" viewBox="0 0 8 5"><path d="M.6 2.5C1.7 1 2.8.4 4 .4s2.3.6 3.4 2.1C6.3 4 5.2 4.6 4 4.6S1.7 4 .6 2.5z" fill="#d0d0d0"/><circle cx="4" cy="2.5" r="1.2" fill="#2f2f2f"/></svg>
<div class="t" style="left:933px;top:236.60000000000002px;font-size:7.15px;color:#e2e2e2;">User.Eco1</div>
<div class="a" style="left:908px;top:247.9px;width:9.5px;height:7.2px;background:#d8c852"></div>
<svg class="a" style="left:921.5px;top:249.0px" width="8" height="5" viewBox="0 0 8 5"><path d="M.6 2.5C1.7 1 2.8.4 4 .4s2.3.6 3.4 2.1C6.3 4 5.2 4.6 4 4.6S1.7 4 .6 2.5z" fill="#d0d0d0"/><circle cx="4" cy="2.5" r="1.2" fill="#2f2f2f"/></svg>
<div class="t" style="left:933px;top:247.0px;font-size:7.15px;color:#e2e2e2;">User.Eco2</div>
<div class="a" style="left:908px;top:258.29999999999995px;width:9.5px;height:7.2px;background:#d0d2cd"></div>
<svg class="a" style="left:921.5px;top:259.4px" width="8" height="5" viewBox="0 0 8 5"><path d="M.6 2.5C1.7 1 2.8.4 4 .4s2.3.6 3.4 2.1C6.3 4 5.2 4.6 4 4.6S1.7 4 .6 2.5z" fill="#d0d0d0"/><circle cx="4" cy="2.5" r="1.2" fill="#2f2f2f"/></svg>
<div class="t" style="left:933px;top:257.4px;font-size:7.15px;color:#e2e2e2;">Edge.Cuts</div>
<div class="a" style="left:908px;top:268.7px;width:9.5px;height:7.2px;background:#ff26e2"></div>
<svg class="a" style="left:921.5px;top:269.8px" width="8" height="5" viewBox="0 0 8 5"><path d="M.6 2.5C1.7 1 2.8.4 4 .4s2.3.6 3.4 2.1C6.3 4 5.2 4.6 4 4.6S1.7 4 .6 2.5z" fill="#d0d0d0"/><circle cx="4" cy="2.5" r="1.2" fill="#2f2f2f"/></svg>
<div class="t" style="left:933px;top:267.8px;font-size:7.15px;color:#e2e2e2;">Margin</div>
<div class="a" style="left:908px;top:279.09999999999997px;width:9.5px;height:7.2px;background:#ff26e2"></div>
<svg class="a" style="left:921.5px;top:280.2px" width="8" height="5" viewBox="0 0 8 5"><path d="M.6 2.5C1.7 1 2.8.4 4 .4s2.3.6 3.4 2.1C6.3 4 5.2 4.6 4 4.6S1.7 4 .6 2.5z" fill="#d0d0d0"/><circle cx="4" cy="2.5" r="1.2" fill="#2f2f2f"/></svg>
<div class="t" style="left:933px;top:278.2px;font-size:7.15px;color:#e2e2e2;">F.Courtyard</div>
<div class="a" style="left:908px;top:289.5px;width:9.5px;height:7.2px;background:#26e9ff"></div>
<svg class="a" style="left:921.5px;top:290.6px" width="8" height="5" viewBox="0 0 8 5"><path d="M.6 2.5C1.7 1 2.8.4 4 .4s2.3.6 3.4 2.1C6.3 4 5.2 4.6 4 4.6S1.7 4 .6 2.5z" fill="#d0d0d0"/><circle cx="4" cy="2.5" r="1.2" fill="#2f2f2f"/></svg>
<div class="t" style="left:933px;top:288.6px;font-size:7.15px;color:#e2e2e2;">B.Courtyard</div>
<div class="a" style="left:908px;top:299.9px;width:9.5px;height:7.2px;background:#afafaf"></div>
<svg class="a" style="left:921.5px;top:301.0px" width="8" height="5" viewBox="0 0 8 5"><path d="M.6 2.5C1.7 1 2.8.4 4 .4s2.3.6 3.4 2.1C6.3 4 5.2 4.6 4 4.6S1.7 4 .6 2.5z" fill="#d0d0d0"/><circle cx="4" cy="2.5" r="1.2" fill="#2f2f2f"/></svg>
<div class="t" style="left:933px;top:299.0px;font-size:7.15px;color:#e2e2e2;">F.Fab</div>
<div class="a" style="left:908px;top:310.29999999999995px;width:9.5px;height:7.2px;background:#585d84"></div>
<svg class="a" style="left:921.5px;top:311.4px" width="8" height="5" viewBox="0 0 8 5"><path d="M.6 2.5C1.7 1 2.8.4 4 .4s2.3.6 3.4 2.1C6.3 4 5.2 4.6 4 4.6S1.7 4 .6 2.5z" fill="#d0d0d0"/><circle cx="4" cy="2.5" r="1.2" fill="#2f2f2f"/></svg>
<div class="t" style="left:933px;top:309.4px;font-size:7.15px;color:#e2e2e2;">B.Fab</div>
<div class="a" style="left:908px;top:320.7px;width:9.5px;height:7.2px;background:#c2c2c2"></div>
<svg class="a" style="left:921.5px;top:321.8px" width="8" height="5" viewBox="0 0 8 5"><path d="M.6 2.5C1.7 1 2.8.4 4 .4s2.3.6 3.4 2.1C6.3 4 5.2 4.6 4 4.6S1.7 4 .6 2.5z" fill="#d0d0d0"/><circle cx="4" cy="2.5" r="1.2" fill="#2f2f2f"/></svg>
<div class="t" style="left:933px;top:319.8px;font-size:7.15px;color:#e2e2e2;">User.1</div>
<div class="a" style="left:908px;top:331.09999999999997px;width:9.5px;height:7.2px;background:#5989db"></div>
<svg class="a" style="left:921.5px;top:332.2px" width="8" height="5" viewBox="0 0 8 5"><path d="M.6 2.5C1.7 1 2.8.4 4 .4s2.3.6 3.4 2.1C6.3 4 5.2 4.6 4 4.6S1.7 4 .6 2.5z" fill="#d0d0d0"/><circle cx="4" cy="2.5" r="1.2" fill="#2f2f2f"/></svg>
<div class="t" style="left:933px;top:330.2px;font-size:7.15px;color:#e2e2e2;">User.2</div>
<div class="a" style="left:908px;top:341.5px;width:9.5px;height:7.2px;background:#b4dbd2"></div>
<svg class="a" style="left:921.5px;top:342.6px" width="8" height="5" viewBox="0 0 8 5"><path d="M.6 2.5C1.7 1 2.8.4 4 .4s2.3.6 3.4 2.1C6.3 4 5.2 4.6 4 4.6S1.7 4 .6 2.5z" fill="#d0d0d0"/><circle cx="4" cy="2.5" r="1.2" fill="#2f2f2f"/></svg>
<div class="t" style="left:933px;top:340.6px;font-size:7.15px;color:#e2e2e2;">User.3</div>
<div class="a" style="left:908px;top:351.9px;width:9.5px;height:7.2px;background:#d8c852"></div>
<svg class="a" style="left:921.5px;top:353.0px" width="8" height="5" viewBox="0 0 8 5"><path d="M.6 2.5C1.7 1 2.8.4 4 .4s2.3.6 3.4 2.1C6.3 4 5.2 4.6 4 4.6S1.7 4 .6 2.5z" fill="#d0d0d0"/><circle cx="4" cy="2.5" r="1.2" fill="#2f2f2f"/></svg>
<div class="t" style="left:933px;top:351.0px;font-size:7.15px;color:#e2e2e2;">User.4</div>
<div class="a" style="left:908px;top:362.3px;width:9.5px;height:7.2px;background:#c2c2c2"></div>
<svg class="a" style="left:921.5px;top:363.40000000000003px" width="8" height="5" viewBox="0 0 8 5"><path d="M.6 2.5C1.7 1 2.8.4 4 .4s2.3.6 3.4 2.1C6.3 4 5.2 4.6 4 4.6S1.7 4 .6 2.5z" fill="#d0d0d0"/><circle cx="4" cy="2.5" r="1.2" fill="#2f2f2f"/></svg>
<div class="t" style="left:933px;top:361.40000000000003px;font-size:7.15px;color:#e2e2e2;">User.5</div>
<div class="a" style="left:908px;top:372.7px;width:9.5px;height:7.2px;background:#5989db"></div>
<svg class="a" style="left:921.5px;top:373.8px" width="8" height="5" viewBox="0 0 8 5"><path d="M.6 2.5C1.7 1 2.8.4 4 .4s2.3.6 3.4 2.1C6.3 4 5.2 4.6 4 4.6S1.7 4 .6 2.5z" fill="#d0d0d0"/><circle cx="4" cy="2.5" r="1.2" fill="#2f2f2f"/></svg>
<div class="t" style="left:933px;top:371.8px;font-size:7.15px;color:#e2e2e2;">User.6</div>
<div class="a" style="left:908px;top:383.1px;width:9.5px;height:7.2px;background:#b4dbd2"></div>
<svg class="a" style="left:921.5px;top:384.20000000000005px" width="8" height="5" viewBox="0 0 8 5"><path d="M.6 2.5C1.7 1 2.8.4 4 .4s2.3.6 3.4 2.1C6.3 4 5.2 4.6 4 4.6S1.7 4 .6 2.5z" fill="#d0d0d0"/><circle cx="4" cy="2.5" r="1.2" fill="#2f2f2f"/></svg>
<div class="t" style="left:933px;top:382.20000000000005px;font-size:7.15px;color:#e2e2e2;">User.7</div>
<div class="a" style="left:908px;top:393.5px;width:9.5px;height:7.2px;background:#d8c852"></div>
<svg class="a" style="left:921.5px;top:394.6px" width="8" height="5" viewBox="0 0 8 5"><path d="M.6 2.5C1.7 1 2.8.4 4 .4s2.3.6 3.4 2.1C6.3 4 5.2 4.6 4 4.6S1.7 4 .6 2.5z" fill="#d0d0d0"/><circle cx="4" cy="2.5" r="1.2" fill="#2f2f2f"/></svg>
<div class="t" style="left:933px;top:392.6px;font-size:7.15px;color:#e2e2e2;">User.8</div>
<div class="a" style="left:908px;top:403.9px;width:9.5px;height:7.2px;background:#e8b2a7"></div>
<svg class="a" style="left:921.5px;top:405.0px" width="8" height="5" viewBox="0 0 8 5"><path d="M.6 2.5C1.7 1 2.8.4 4 .4s2.3.6 3.4 2.1C6.3 4 5.2 4.6 4 4.6S1.7 4 .6 2.5z" fill="#d0d0d0"/><circle cx="4" cy="2.5" r="1.2" fill="#2f2f2f"/></svg>
<div class="t" style="left:933px;top:403.0px;font-size:7.15px;color:#e2e2e2;">User.9</div>
<svg class="a" style="left:904px;top:427.5px" width="3" height="5" viewBox="0 0 3 5"><path d="M0 0l3 2.5L0 5z" fill="#666"/></svg>
<div class="t" style="left:907px;top:425px;font-size:6.8px;color:#666;">層顯示選項</div>
<div class="t" style="left:900px;top:437.8px;font-size:7.1px;color:#ddd;">預設 (Ctrl+Tab):</div>
<div class="a" style="left:900px;top:448px;width:96px;height:11px;background:#555;border-radius:3px"></div>
<div class="t" style="left:905px;top:448.5px;font-size:7.2px;color:#eee;">所有層</div>
<svg class="a" style="left:987px;top:449.5px" width="6" height="8" viewBox="0 0 6 8"><path d="M.8 3L3 .8 5.2 3M.8 5L3 7.2 5.2 5" stroke="#ddd" stroke-width="1" fill="none"/></svg>
<div class="t" style="left:900px;top:461.5px;font-size:7.2px;color:#ddd;">視角 (Option+Tab):</div>
<div class="a" style="left:900px;top:472px;width:96px;height:11px;background:#555;border-radius:3px"></div>
<div class="a" style="left:905px;top:477px;width:76px;height:1px;background:#777"></div>
<svg class="a" style="left:987px;top:473.5px" width="6" height="8" viewBox="0 0 6 8"><path d="M.8 3L3 .8 5.2 3M.8 5L3 7.2 5.2 5" stroke="#ddd" stroke-width="1" fill="none"/></svg>
<div class="a" style="left:896px;top:491px;width:101.5px;height:10px;background:#1f1f1f"></div>
<div class="t" style="left:898px;top:491px;font-size:7px;color:#ddd;">選擇篩選器</div>
<div class="a" style="left:899px;top:504.5px;width:8px;height:8px;background:#5a5a5a;border-radius:2px"></div>
<svg class="a" style="left:900px;top:505.5px" width="6" height="6" viewBox="0 0 6 6"><path d="M.5 3l1.8 2L5.5.8" stroke="#fff" stroke-width="1.2" fill="none"/></svg>
<div class="t" style="left:910px;top:503.5px;font-size:6.9px;color:#ddd;">所有項目</div>
<div class="a" style="left:946px;top:504.5px;width:8px;height:8px;background:#5a5a5a;border-radius:2px"></div>
<div class="t" style="left:958px;top:503.5px;font-size:6.9px;color:#ddd;">鎖定項目</div>
<div class="a" style="left:899px;top:513.5px;width:8px;height:8px;background:#5a5a5a;border-radius:2px"></div>
<svg class="a" style="left:900px;top:514.5px" width="6" height="6" viewBox="0 0 6 6"><path d="M.5 3l1.8 2L5.5.8" stroke="#fff" stroke-width="1.2" fill="none"/></svg>
<div class="t" style="left:910px;top:512.5px;font-size:6.9px;color:#ddd;">封裝</div>
<div class="a" style="left:946px;top:513.5px;width:8px;height:8px;background:#5a5a5a;border-radius:2px"></div>
<svg class="a" style="left:947px;top:514.5px" width="6" height="6" viewBox="0 0 6 6"><path d="M.5 3l1.8 2L5.5.8" stroke="#fff" stroke-width="1.2" fill="none"/></svg>
<div class="t" style="left:958px;top:512.5px;font-size:6.9px;color:#ddd;">文字</div>
<div class="a" style="left:888.9px;top:521.4px;width:103.6px;height:67.6px;background:#000;border-radius:4px"></div>
<svg class="a" style="left:890.6px;top:522.8px" width="100.2" height="64.6" viewBox="0 0 1000 646"><rect width="1000" height="646" fill="#303030"/><rect width="1000" height="17" fill="#4a4e45"/><rect x="0" y="17" width="1000" height="60" fill="#323232"/><rect x="20" y="25" width="480" height="14" fill="#777" opacity=".5"/><rect x="20" y="45" width="470" height="12" fill="#666" opacity=".6"/><rect x="23" y="80" width="847" height="480" fill="#000c1e"/><path d="M172 80V560" stroke="#7a4a80" stroke-width="6"/><path d="M114 80V560M572 80V560" stroke="#2a3444" stroke-width="6"/><g fill="#999" opacity=".6"><rect x="5" y="90" width="12" height="12"/><rect x="5" y="112" width="12" height="12"/><rect x="5" y="134" width="12" height="12"/><rect x="5" y="156" width="12" height="12"/><rect x="5" y="178" width="12" height="12"/><rect x="5" y="200" width="12" height="12"/><rect x="5" y="222" width="12" height="12"/><rect x="5" y="244" width="12" height="12"/><rect x="5" y="266" width="12" height="12"/><rect x="5" y="288" width="12" height="12"/><rect x="5" y="310" width="12" height="12"/><rect x="5" y="332" width="12" height="12"/><rect x="5" y="354" width="12" height="12"/><rect x="5" y="376" width="12" height="12"/><rect x="5" y="398" width="12" height="12"/><rect x="5" y="420" width="12" height="12"/></g><g fill="#999" opacity=".5"><rect x="877" y="90" width="14" height="12"/><rect x="877" y="112" width="14" height="12"/><rect x="877" y="134" width="14" height="12"/><rect x="877" y="156" width="14" height="12"/><rect x="877" y="178" width="14" height="12"/><rect x="877" y="200" width="14" height="12"/><rect x="877" y="222" width="14" height="12"/><rect x="877" y="244" width="14" height="12"/><rect x="877" y="266" width="14" height="12"/><rect x="877" y="288" width="14" height="12"/><rect x="877" y="310" width="14" height="12"/><rect x="877" y="332" width="14" height="12"/><rect x="877" y="354" width="14" height="12"/><rect x="877" y="376" width="14" height="12"/><rect x="877" y="398" width="14" height="12"/><rect x="877" y="420" width="14" height="12"/><rect x="877" y="442" width="14" height="12"/></g><rect x="900" y="80" width="100" height="480" fill="#2a2a2a"/><rect x="912" y="100" width="12" height="9" fill="#c83434"/><rect x="930" y="102" width="50" height="5" fill="#888" opacity=".7"/><rect x="912" y="114" width="12" height="9" fill="#4d7fc4"/><rect x="930" y="116" width="50" height="5" fill="#888" opacity=".7"/><rect x="912" y="128" width="12" height="9" fill="#84008a"/><rect x="930" y="130" width="50" height="5" fill="#888" opacity=".7"/><rect x="912" y="142" width="12" height="9" fill="#000084"/><rect x="930" y="144" width="50" height="5" fill="#888" opacity=".7"/><rect x="912" y="156" width="12" height="9" fill="#a89a94"/><rect x="930" y="158" width="50" height="5" fill="#888" opacity=".7"/><rect x="912" y="170" width="12" height="9" fill="#3aa6a6"/><rect x="930" y="172" width="50" height="5" fill="#888" opacity=".7"/><rect x="912" y="184" width="12" height="9" fill="#f2eda1"/><rect x="930" y="186" width="50" height="5" fill="#888" opacity=".7"/><rect x="912" y="198" width="12" height="9" fill="#e8b2a7"/><rect x="930" y="200" width="50" height="5" fill="#888" opacity=".7"/><rect x="912" y="212" width="12" height="9" fill="#7a3a7a"/><rect x="930" y="214" width="50" height="5" fill="#888" opacity=".7"/><rect x="912" y="226" width="12" height="9" fill="#2e6a5e"/><rect x="930" y="228" width="50" height="5" fill="#888" opacity=".7"/><rect x="912" y="240" width="12" height="9" fill="#c2c2c2"/><rect x="930" y="242" width="50" height="5" fill="#888" opacity=".7"/><rect x="912" y="254" width="12" height="9" fill="#5989db"/><rect x="930" y="256" width="50" height="5" fill="#888" opacity=".7"/><rect x="912" y="268" width="12" height="9" fill="#b4dbd2"/><rect x="930" y="270" width="50" height="5" fill="#888" opacity=".7"/><rect x="912" y="282" width="12" height="9" fill="#d8c852"/><rect x="930" y="284" width="50" height="5" fill="#888" opacity=".7"/><rect x="912" y="296" width="12" height="9" fill="#d0d2cd"/><rect x="930" y="298" width="50" height="5" fill="#888" opacity=".7"/><rect x="912" y="310" width="12" height="9" fill="#ff26e2"/><rect x="930" y="312" width="50" height="5" fill="#888" opacity=".7"/><rect x="912" y="324" width="12" height="9" fill="#ff26e2"/><rect x="930" y="326" width="50" height="5" fill="#888" opacity=".7"/><rect x="912" y="338" width="12" height="9" fill="#26e9ff"/><rect x="930" y="340" width="50" height="5" fill="#888" opacity=".7"/><rect x="912" y="352" width="12" height="9" fill="#afafaf"/><rect x="930" y="354" width="50" height="5" fill="#888" opacity=".7"/><rect x="912" y="366" width="12" height="9" fill="#585d84"/><rect x="930" y="368" width="50" height="5" fill="#888" opacity=".7"/><rect x="905" y="400" width="90" height="25" fill="#555"/><rect x="905" y="480" width="90" height="60" fill="#4a6aa0"/><g stroke="#22407a" stroke-width="7" fill="none"><path d="M262 265L300 225H355V250M262 330L330 395H380L445 335M355 250L390 250 390 320 360 345M450 370L490 400M450 360H530M330 345H360"/></g><g fill="#b89a3a"><rect x="255" y="265" width="12" height="110"/><rect x="310" y="230" width="10" height="30"/><rect x="340" y="188" width="16" height="10"/><rect x="340" y="212" width="16" height="10"/><rect x="340" y="236" width="16" height="10"/><rect x="445" y="280" width="10" height="90"/><rect x="525" y="305" width="10" height="65"/><rect x="480" y="400" width="10" height="45"/><rect x="320" y="338" width="10" height="8"/><rect x="350" y="338" width="10" height="8"/><rect x="320" y="368" width="10" height="8"/><rect x="350" y="368" width="10" height="8"/><rect x="320" y="398" width="10" height="8"/><rect x="350" y="398" width="10" height="8"/></g><rect x="0" y="560" width="1000" height="30" fill="#2e2e2e"/><rect x="0" y="590" width="1000" height="56" fill="#262a20"/><rect x="40" y="598" width="29" height="30" rx="6" fill="#4a9ef0"/><rect x="79" y="598" width="29" height="30" rx="6" fill="#bbb"/><rect x="118" y="598" width="29" height="30" rx="6" fill="#3a8ef0"/><rect x="157" y="598" width="29" height="30" rx="6" fill="#5c5"/><rect x="196" y="598" width="29" height="30" rx="6" fill="#3a8ef0"/><rect x="235" y="598" width="29" height="30" rx="6" fill="#8c8"/><rect x="274" y="598" width="29" height="30" rx="6" fill="#e9a"/><rect x="313" y="598" width="29" height="30" rx="6" fill="#5c5"/><rect x="352" y="598" width="29" height="30" rx="6" fill="#eee"/><rect x="391" y="598" width="29" height="30" rx="6" fill="#a85"/><rect x="430" y="598" width="29" height="30" rx="6" fill="#eee"/><rect x="469" y="598" width="29" height="30" rx="6" fill="#eb4"/><rect x="508" y="598" width="29" height="30" rx="6" fill="#eee"/><rect x="547" y="598" width="29" height="30" rx="6" fill="#111"/><rect x="586" y="598" width="29" height="30" rx="6" fill="#e44"/><rect x="625" y="598" width="29" height="30" rx="6" fill="#e94"/><rect x="664" y="598" width="29" height="30" rx="6" fill="#3af"/><rect x="703" y="598" width="29" height="30" rx="6" fill="#999"/><rect x="742" y="598" width="29" height="30" rx="6" fill="#3af"/><rect x="781" y="598" width="29" height="30" rx="6" fill="#5a5"/><rect x="820" y="598" width="29" height="30" rx="6" fill="#33c"/><rect x="859" y="598" width="29" height="30" rx="6" fill="#7bf"/><rect x="898" y="598" width="29" height="30" rx="6" fill="#888"/></svg>
<div class="a" style="left:130px;top:101.5px;width:740.5px;height:416.5px;background:#303030;border-radius:9px;box-shadow:0 0 0 .6px rgba(255,255,255,.14),0 2px 10px rgba(0,0,0,.5)"></div>
<div class="a" style="left:130px;top:101.5px;width:740.5px;height:15.5px;background:#383838;border-radius:9px 9px 0 0;border-top:1px solid #505050"></div>
<div class="a" style="left:130px;top:117px;width:740.5px;height:1px;background:#1c1c1c"></div>
<div class="a" style="left:133.9px;top:105.7px;width:7.4px;height:7.4px;border-radius:50%;background:#ec6a5e"></div>
<div class="a" style="left:145.70000000000002px;top:105.7px;width:7.4px;height:7.4px;border-radius:50%;background:#f4be4f"></div>
<div class="a" style="left:157.10000000000002px;top:105.7px;width:7.4px;height:7.4px;border-radius:50%;background:#61c554"></div>
<div class="t" style="left:483px;top:104.4px;font-size:7.6px;color:#b8b8b8;">3D 查看器</div>
<div class="a" style="left:130px;top:118px;width:740.5px;height:19.5px;background:#333333"></div>
<div class="a" style="left:153px;top:121px;width:1px;height:13px;background:#454545"></div>
<div class="a" style="left:176.5px;top:121px;width:1px;height:13px;background:#454545"></div>
<div class="a" style="left:200px;top:121px;width:1px;height:13px;background:#454545"></div>
<div class="a" style="left:279.7px;top:121px;width:1px;height:13px;background:#454545"></div>
<div class="a" style="left:323px;top:121px;width:1px;height:13px;background:#454545"></div>
<div class="a" style="left:364px;top:121px;width:1px;height:13px;background:#454545"></div>
<div class="a" style="left:407px;top:121px;width:1px;height:13px;background:#454545"></div>
<div class="a" style="left:430px;top:121px;width:1px;height:13px;background:#454545"></div>
<div class="a" style="left:510px;top:121px;width:1px;height:13px;background:#454545"></div>
<div class="a" style="left:534px;top:121px;width:1px;height:13px;background:#454545"></div>
<svg class="a" style="left:133px;top:120.5px" width="15" height="14" viewBox="0 0 15 14"><rect x="1" y="0.5" width="9" height="9" fill="#d8d8d8"/><rect x="0.5" y="9" width="10" height="2" fill="#ccc"/><path d="M0 12.5h8" stroke="#4aa8e6" stroke-width="1.3"/><circle cx="11" cy="10" r="3.8" fill="#e05a6a"/><path d="M11 7.5v4M9.3 10l1.7 1.7 1.7-1.7" stroke="#fff" stroke-width="1" fill="none"/></svg>
<svg class="a" style="left:158px;top:120.5px" width="14" height="14" viewBox="0 0 14 14"><rect x="0.5" y="1.5" width="7" height="11" fill="#777" stroke="#999"/><path d="M4.5 0.5h6l3 3v10h-9z" fill="#555" stroke="#aaa"/><path d="M6.5 6h4M6.5 8h3" stroke="#aaa" stroke-width=".8"/></svg>
<svg class="a" style="left:182px;top:120.5px" width="14" height="14" viewBox="0 0 14 14"><path d="M7 0.5l6 3v7l-6 3.5-6-3.5v-7z" fill="#aaa"/><path d="M7 0.5v13.5L1 10.5v-7z" fill="#ddd"/><path d="M7 .5v13.5" stroke="#4aa8e6" stroke-width="1.4"/></svg>
<svg class="a" style="left:206px;top:120.5px" width="14" height="14" viewBox="0 0 14 14"><path d="M2 6A5.2 5.2 0 0 1 11.6 4M12 8A5.2 5.2 0 0 1 2.4 10" stroke="#e0d8e2" stroke-width="1.4" fill="none"/><path d="M9 4h3.5V.8M5 10H1.5v3.2" stroke="#e0d8e2" stroke-width="1.3" fill="none"/></svg>
<svg class="a" style="left:224px;top:120.5px" width="14" height="14" viewBox="0 0 14 14"><circle cx="6" cy="6" r="5" stroke="#e0d8e2" stroke-width="1.2" fill="none"/><path d="M9.6 9.6L13.2 13.2" stroke="#e0d8e2" stroke-width="1.6"/><path d="M3.5 6h5M6 3.5v5" stroke="#e0d8e2" stroke-width="1.6"/></svg>
<svg class="a" style="left:243px;top:120.5px" width="14" height="14" viewBox="0 0 14 14"><circle cx="6" cy="6" r="5" stroke="#e0d8e2" stroke-width="1.2" fill="none"/><path d="M9.6 9.6L13.2 13.2" stroke="#e0d8e2" stroke-width="1.6"/><path d="M3.5 6h5" stroke="#e0d8e2" stroke-width="1.6"/></svg>
<svg class="a" style="left:261px;top:120.5px" width="14" height="14" viewBox="0 0 14 14"><circle cx="6" cy="6" r="5" stroke="#e0d8e2" stroke-width="1.2" fill="none"/><path d="M9.6 9.6L13.2 13.2" stroke="#e0d8e2" stroke-width="1.6"/><path d="M4 3h3l1.5 1.5V9H4z" fill="#e0d8e2"/></svg>
<svg class="a" style="left:286px;top:120.5px" width="13" height="14" viewBox="0 0 13 14"><path d="M6.5 7.5V0.5M6.5 7.5H12.5M6.5 7.5L0.5 13.5" stroke="#e0d8e2" stroke-width="1" fill="none"/><path d="M6.5 7.5H12.5" stroke="#e0505a" stroke-width="1.3"/><text x="0.5" y="5" font-family="Liberation Sans" font-size="5" fill="#e0d8e2">X</text><path d="M10 3.5c-2.2 0-2.2 7.5 0 7.5" stroke="#e0d8e2" stroke-width=".9" fill="none"/></svg>
<svg class="a" style="left:304px;top:120.5px" width="13" height="14" viewBox="0 0 13 14"><path d="M6.5 7.5V0.5M6.5 7.5H12.5M6.5 7.5L0.5 13.5" stroke="#e0d8e2" stroke-width="1" fill="none"/><path d="M6.5 7.5H12.5" stroke="#e0505a" stroke-width="1.3"/><text x="0.5" y="5" font-family="Liberation Sans" font-size="5" fill="#e0d8e2">X</text><path d="M10 3.5c-2.2 0-2.2 7.5 0 7.5" stroke="#e0d8e2" stroke-width=".9" fill="none"/></svg>
<svg class="a" style="left:328px;top:120.5px" width="13" height="14" viewBox="0 0 13 14"><path d="M6.5 7.5V0.5M6.5 7.5H12.5M6.5 7.5L0.5 13.5" stroke="#e0d8e2" stroke-width="1" fill="none"/><path d="M6.5 7.5L0.5 13.5" stroke="#e0505a" stroke-width="1.3"/><text x="8.5" y="5" font-family="Liberation Sans" font-size="5" fill="#e0d8e2">Y</text><path d="M1.5 9.5c1.5 0 3 1.5 2 3.5" stroke="#e0d8e2" stroke-width=".9" fill="none"/></svg>
<svg class="a" style="left:346px;top:120.5px" width="13" height="14" viewBox="0 0 13 14"><path d="M6.5 7.5V0.5M6.5 7.5H12.5M6.5 7.5L0.5 13.5" stroke="#e0d8e2" stroke-width="1" fill="none"/><path d="M6.5 7.5L0.5 13.5" stroke="#e0505a" stroke-width="1.3"/><text x="8.5" y="5" font-family="Liberation Sans" font-size="5" fill="#e0d8e2">Y</text><path d="M1.5 9.5c1.5 0 3 1.5 2 3.5" stroke="#e0d8e2" stroke-width=".9" fill="none"/></svg>
<svg class="a" style="left:370px;top:120.5px" width="13" height="14" viewBox="0 0 13 14"><path d="M6.5 7.5V0.5M6.5 7.5H12.5M6.5 7.5L0.5 13.5" stroke="#e0d8e2" stroke-width="1" fill="none"/><path d="M6.5 7.5V0.5" stroke="#e0505a" stroke-width="1.3"/><text x="8.5" y="13.5" font-family="Liberation Sans" font-size="5" fill="#e0d8e2">Z</text><path d="M3.5 3.5c0-1.5 6-1.5 6 0" stroke="#e0d8e2" stroke-width=".9" fill="none"/></svg>
<svg class="a" style="left:389px;top:120.5px" width="13" height="14" viewBox="0 0 13 14"><path d="M6.5 7.5V0.5M6.5 7.5H12.5M6.5 7.5L0.5 13.5" stroke="#e0d8e2" stroke-width="1" fill="none"/><path d="M6.5 7.5V0.5" stroke="#e0505a" stroke-width="1.3"/><text x="8.5" y="13.5" font-family="Liberation Sans" font-size="5" fill="#e0d8e2">Z</text><path d="M3.5 3.5c0-1.5 6-1.5 6 0" stroke="#e0d8e2" stroke-width=".9" fill="none"/></svg>
<svg class="a" style="left:413px;top:120.5px" width="12" height="14" viewBox="0 0 12 14"><path d="M3 0.5h8.5v13H3z" fill="#4aa8e6"/><path d="M0.5 1v12M0.5 1h2M0.5 13h2" stroke="#aaa" stroke-dasharray="1 1" fill="none"/><path d="M5 7h5" stroke="#fff" stroke-width=".8"/></svg>
<svg class="a" style="left:436px;top:120.5px" width="14" height="14" viewBox="0 0 14 14"><path d="M0.5 7L6 1.5V5h7.5v4H6v3.5z" fill="#4aa8e6"/></svg>
<svg class="a" style="left:454px;top:120.5px" width="14" height="14" viewBox="0 0 14 14"><path d="M13.5 7L8 1.5V5H.5v4H8v3.5z" fill="#4aa8e6"/></svg>
<svg class="a" style="left:472.5px;top:120.5px" width="14" height="14" viewBox="0 0 14 14"><path d="M7 0.5L1.5 6H5v7.5h4V6h3.5z" fill="#4aa8e6"/></svg>
<svg class="a" style="left:491px;top:120.5px" width="14" height="14" viewBox="0 0 14 14"><path d="M7 13.5L1.5 8H5V.5h4V8h3.5z" fill="#4aa8e6"/></svg>
<svg class="a" style="left:515px;top:120.5px" width="14" height="14" viewBox="0 0 14 14"><path d="M7 0.5l6 3.2v7L7 13.8 1 10.7v-7z" fill="#bbb"/><path d="M7 6.8v7L1 10.7v-7z" fill="#ddd"/><path d="M7 6.8l6-3.1-6-3.2-6 3.2z" fill="#eee"/><path d="M7 6.8V13.8" stroke="#999" stroke-width=".5"/></svg>
<div class="a" style="left:537px;top:118.5px;width:17.5px;height:18px;background:#13223a;border:1px solid #36506e;border-radius:2px"></div>
<svg class="a" style="left:539px;top:120.5px" width="14" height="14" viewBox="0 0 14 14"><path d="M7 6l6 3-6 3.5-6-3.5z" fill="#f0a030"/><path d="M7 1l6 3.5-6 3.5-6-3.5z" fill="#4aa8e6"/><path d="M1 4.5l6 3.5v3.5L1 8z" fill="#3a88c6"/><path d="M13 4.5L7 8v3.5L13 8z" fill="#7ac4f0"/></svg>
<div class="a" style="left:130px;top:137.5px;width:625.8px;height:363.5px;background:linear-gradient(180deg,#d2d2ea 0%,#a0a0b8 50%,#68687f 100%)"></div>
<div class="a" style="left:266.4px;top:142.7px;width:353.1px;height:352.8px;background:#254532"></div>
<svg class="a" style="left:0px;top:0px" width="1000" height="646" viewBox="0 0 1000 646"><g stroke="#4a7238" stroke-width=".7" fill="none"><path d="M307 247.4H317.5L337 228"/><path d="M307 256.7H317.5L342 232"/><path d="M307 266.4H387L491 370"/><path d="M307 275.7H387L491 380"/><path d="M307 304.2H345L353 313"/><path d="M307 313.5H328L353 338"/><path d="M307 323.3H315L353 362"/><path d="M350 226L453 329H458"/><path d="M379 236L458 313"/><path d="M470 327L497 356"/><path d="M470 300.5H531"/><path d="M470 309H531"/><path d="M502 357L531 324"/></g><path d="M298.40000000000003 238.1L307.3 242.79999999999998V338.6H288.1L288.1 338.6z" fill="#0e0e0e"/><path d="M307.7 250.79999999999998V338.6" stroke="#d8d8d8" stroke-width=".6"/><rect x="288.1" y="238.1" width="10.3" height="100.5" fill="#6e6662"/><rect x="290.95" y="240.82" width="4.6" height="4.6" fill="#161414"/><rect x="292.45" y="242.32" width="1.6" height="1.6" fill="#3a3636"/><rect x="290.95" y="250.88" width="4.6" height="4.6" fill="#161414"/><rect x="292.45" y="252.38" width="1.6" height="1.6" fill="#3a3636"/><rect x="290.95" y="260.93" width="4.6" height="4.6" fill="#161414"/><rect x="292.45" y="262.43" width="1.6" height="1.6" fill="#3a3636"/><rect x="290.95" y="270.97" width="4.6" height="4.6" fill="#161414"/><rect x="292.45" y="272.47" width="1.6" height="1.6" fill="#3a3636"/><rect x="290.95" y="281.02" width="4.6" height="4.6" fill="#161414"/><rect x="292.45" y="282.52" width="1.6" height="1.6" fill="#3a3636"/><rect x="290.95" y="291.07" width="4.6" height="4.6" fill="#161414"/><rect x="292.45" y="292.57" width="1.6" height="1.6" fill="#3a3636"/><rect x="290.95" y="301.12" width="4.6" height="4.6" fill="#161414"/><rect x="292.45" y="302.62" width="1.6" height="1.6" fill="#3a3636"/><rect x="290.95" y="311.18" width="4.6" height="4.6" fill="#161414"/><rect x="292.45" y="312.68" width="1.6" height="1.6" fill="#3a3636"/><rect x="290.95" y="321.22" width="4.6" height="4.6" fill="#161414"/><rect x="292.45" y="322.72" width="1.6" height="1.6" fill="#3a3636"/><rect x="290.95" y="331.27" width="4.6" height="4.6" fill="#161414"/><rect x="292.45" y="332.77" width="1.6" height="1.6" fill="#3a3636"/><path d="M344.5 198L350.5 204V233.4H338.7L334.2 228.9z" fill="#0e0e0e"/><path d="M350.9 212V233.4" stroke="#d8d8d8" stroke-width=".6"/><rect x="334.2" y="198" width="10.3" height="30.900000000000002" fill="#6e6662"/><rect x="337.05" y="200.85" width="4.6" height="4.6" fill="#161414"/><rect x="338.55" y="202.35" width="1.6" height="1.6" fill="#3a3636"/><rect x="337.05" y="211.15" width="4.6" height="4.6" fill="#161414"/><rect x="338.55" y="212.65" width="1.6" height="1.6" fill="#3a3636"/><rect x="337.05" y="221.45" width="4.6" height="4.6" fill="#161414"/><rect x="338.55" y="222.95" width="1.6" height="1.6" fill="#3a3636"/><path d="M458.2 265.7V334.5" stroke="#ddd" stroke-width=".6"/><rect x="459.7" y="253.7" width="10.6" height="80.8" fill="#6e6662"/><rect x="462.55" y="256.45" width="4.6" height="4.6" fill="#161414"/><rect x="464.05" y="257.95" width="1.6" height="1.6" fill="#3a3636"/><rect x="462.55" y="266.55" width="4.6" height="4.6" fill="#161414"/><rect x="464.05" y="268.05" width="1.6" height="1.6" fill="#3a3636"/><rect x="462.55" y="276.65" width="4.6" height="4.6" fill="#161414"/><rect x="464.05" y="278.15" width="1.6" height="1.6" fill="#3a3636"/><rect x="462.55" y="286.75" width="4.6" height="4.6" fill="#161414"/><rect x="464.05" y="288.25" width="1.6" height="1.6" fill="#3a3636"/><rect x="462.55" y="296.85" width="4.6" height="4.6" fill="#161414"/><rect x="464.05" y="298.35" width="1.6" height="1.6" fill="#3a3636"/><rect x="462.55" y="306.95" width="4.6" height="4.6" fill="#161414"/><rect x="464.05" y="308.45" width="1.6" height="1.6" fill="#3a3636"/><rect x="462.55" y="317.05" width="4.6" height="4.6" fill="#161414"/><rect x="464.05" y="318.55" width="1.6" height="1.6" fill="#3a3636"/><rect x="462.55" y="327.15" width="4.6" height="4.6" fill="#161414"/><rect x="464.05" y="328.65" width="1.6" height="1.6" fill="#3a3636"/><path d="M536 272.9L530.8 275.5V333.38H536z" fill="#0e0e0e"/><path d="M530.4 283.5V333.38" stroke="#d8d8d8" stroke-width=".6"/><rect x="536" y="272.9" width="10.3" height="60.480000000000004" fill="#6e6662"/><rect x="538.85" y="275.64" width="4.6" height="4.6" fill="#161414"/><rect x="540.35" y="277.14" width="1.6" height="1.6" fill="#3a3636"/><rect x="538.85" y="285.72" width="4.6" height="4.6" fill="#161414"/><rect x="540.35" y="287.22" width="1.6" height="1.6" fill="#3a3636"/><rect x="538.85" y="295.80" width="4.6" height="4.6" fill="#161414"/><rect x="540.35" y="297.30" width="1.6" height="1.6" fill="#3a3636"/><rect x="538.85" y="305.88" width="4.6" height="4.6" fill="#161414"/><rect x="540.35" y="307.38" width="1.6" height="1.6" fill="#3a3636"/><rect x="538.85" y="315.96" width="4.6" height="4.6" fill="#161414"/><rect x="540.35" y="317.46" width="1.6" height="1.6" fill="#3a3636"/><rect x="538.85" y="326.04" width="4.6" height="4.6" fill="#161414"/><rect x="540.35" y="327.54" width="1.6" height="1.6" fill="#3a3636"/><path d="M496 361L491.3 363V403.0H496z" fill="#0e0e0e"/><path d="M490.90000000000003 371V403.0" stroke="#d8d8d8" stroke-width=".6"/><rect x="496" y="361" width="8.5" height="42.0" fill="#6e6662"/><rect x="497.95" y="363.95" width="4.6" height="4.6" fill="#161414"/><rect x="499.45" y="365.45" width="1.6" height="1.6" fill="#3a3636"/><rect x="497.95" y="374.45" width="4.6" height="4.6" fill="#161414"/><rect x="499.45" y="375.95" width="1.6" height="1.6" fill="#3a3636"/><rect x="497.95" y="384.95" width="4.6" height="4.6" fill="#161414"/><rect x="499.45" y="386.45" width="1.6" height="1.6" fill="#3a3636"/><rect x="497.95" y="395.45" width="4.6" height="4.6" fill="#161414"/><rect x="499.45" y="396.95" width="1.6" height="1.6" fill="#3a3636"/><circle cx="353" cy="313.3" r="2.6" fill="#cfd0c8" stroke="#e8e030" stroke-width="1.3"/><circle cx="382" cy="313.3" r="2.6" fill="#cfd0c8" stroke="#e8e030" stroke-width="1.3"/><rect x="355.5" y="308.90000000000003" width="24" height="8.8" fill="none" stroke="#bbb" stroke-width=".4"/><rect x="356" y="309.3" width="23" height="8" rx="2" fill="#e8b880"/><rect x="357" y="311.3" width="21" height="2.5" fill="#f8dcb0" opacity=".8"/><circle cx="353" cy="337.9" r="2.6" fill="#cfd0c8" stroke="#e8e030" stroke-width="1.3"/><circle cx="382" cy="337.9" r="2.6" fill="#cfd0c8" stroke="#e8e030" stroke-width="1.3"/><rect x="355.5" y="333.5" width="24" height="8.8" fill="none" stroke="#bbb" stroke-width=".4"/><rect x="356" y="333.9" width="23" height="8" rx="2" fill="#e8b880"/><rect x="357" y="335.9" width="21" height="2.5" fill="#f8dcb0" opacity=".8"/><circle cx="353" cy="362.3" r="2.6" fill="#cfd0c8" stroke="#e8e030" stroke-width="1.3"/><circle cx="382" cy="362.3" r="2.6" fill="#cfd0c8" stroke="#e8e030" stroke-width="1.3"/><rect x="355.5" y="357.90000000000003" width="24" height="8.8" fill="none" stroke="#bbb" stroke-width=".4"/><rect x="356" y="358.3" width="23" height="8" rx="2" fill="#e8b880"/><rect x="357" y="360.3" width="21" height="2.5" fill="#f8dcb0" opacity=".8"/><defs><radialGradient id="ledg" cx=".38" cy=".32" r=".75"><stop offset="0" stop-color="#ffb070"/><stop offset=".25" stop-color="#e85a1a"/><stop offset=".65" stop-color="#a81e06"/><stop offset="1" stop-color="#4a0800"/></radialGradient></defs><ellipse cx="375.5" cy="186.3" rx="6.5" ry="2.6" fill="none" stroke="#cfd8cf" stroke-width=".45"/><ellipse cx="375.5" cy="184.8" rx="6" ry="2.4" fill="none" stroke="#cfd8cf" stroke-width=".45"/><path d="M379 177.3a4.5 4.5 0 1 1 0 9" transform="translate(0 0)" fill="none" stroke="#f0e020" stroke-width="1.3"/><circle cx="375.8" cy="181.3" r="5.9" fill="none" stroke="#f08a28" stroke-width="1.8"/><circle cx="373.7" cy="179.3" r="6" fill="url(#ledg)"/><ellipse cx="375.5" cy="208.8" rx="6.5" ry="2.6" fill="none" stroke="#cfd8cf" stroke-width=".45"/><ellipse cx="375.5" cy="207.3" rx="6" ry="2.4" fill="none" stroke="#cfd8cf" stroke-width=".45"/><path d="M379 199.8a4.5 4.5 0 1 1 0 9" transform="translate(0 0)" fill="none" stroke="#f0e020" stroke-width="1.3"/><circle cx="375.8" cy="203.8" r="5.9" fill="none" stroke="#f08a28" stroke-width="1.8"/><circle cx="373.7" cy="201.8" r="6" fill="url(#ledg)"/><ellipse cx="375.5" cy="231.2" rx="6.5" ry="2.6" fill="none" stroke="#cfd8cf" stroke-width=".45"/><ellipse cx="375.5" cy="229.7" rx="6" ry="2.4" fill="none" stroke="#cfd8cf" stroke-width=".45"/><path d="M379 222.2a4.5 4.5 0 1 1 0 9" transform="translate(0 0)" fill="none" stroke="#f0e020" stroke-width="1.3"/><circle cx="375.8" cy="226.2" r="5.9" fill="none" stroke="#f08a28" stroke-width="1.8"/><circle cx="373.7" cy="224.2" r="6" fill="url(#ledg)"/><text x="299" y="240" font-size="6" fill="#ddd" font-family="Liberation Sans">J1</text><text x="345" y="203" font-size="6" fill="#ddd" font-family="Liberation Sans">2</text><text x="364" y="306.5" font-size="6" fill="#ddd" font-family="Liberation Sans">R1</text><text x="364" y="331" font-size="6" fill="#ddd" font-family="Liberation Sans">R2</text><text x="364" y="355.5" font-size="6" fill="#ddd" font-family="Liberation Sans">R3</text><text x="460" y="256" font-size="6" fill="#ddd" font-family="Liberation Sans">J5</text><text x="531" y="273" font-size="6" fill="#ddd" font-family="Liberation Sans">J4</text><text x="493" y="358" font-size="6" fill="#ddd" font-family="Liberation Sans">J3</text></svg>
<svg class="a" style="left:140px;top:450px" width="40" height="40" viewBox="0 0 40 40"><path d="M14 15v8" stroke="#20d020" stroke-width="4"/><path d="M14 7.5L9.8 16h8.4z" fill="#20e020"/><path d="M18 27h8" stroke="#f02020" stroke-width="4"/><path d="M25 22.8l8.5 4.2-8.5 4.2z" fill="#ff1a1a"/><circle cx="14" cy="27" r="5.2" fill="#0a0aa0"/></svg>
<div class="a" style="left:755.8px;top:137.5px;width:114.7px;height:363.5px;background:#2f2f2f"></div>
<div class="a" style="left:760px;top:137.5px;width:110px;height:9px;background:#1e1e1e"></div>
<div class="t" style="left:762px;top:137px;font-size:6.9px;color:#ddd;">外觀</div>
<div class="a" style="left:760px;top:147px;width:103px;height:290px;background:#2a2a2a"></div>
<div class="a" style="left:863.5px;top:147px;width:6px;height:283px;background:#2a2a2a"></div>
<div class="a" style="left:864px;top:148px;width:4.5px;height:274px;background:#8a8a8a;border-radius:2px"></div>
<div class="a" style="left:763px;top:151.0px;width:9.5px;height:7px;background:#3e3a2c"></div>
<svg class="a" style="left:776px;top:152.0px" width="8" height="5" viewBox="0 0 8 5"><circle cx="4" cy="2.5" r="4.8" fill="#383838"/><path d="M.6 2.5C1.7 1 2.8.4 4 .4s2.3.6 3.4 2.1C6.3 4 5.2 4.6 4 4.6S1.7 4 .6 2.5z" fill="#d8d8d8"/><circle cx="4" cy="2.5" r="1.2" fill="#383838"/></svg>
<div class="t" style="left:788px;top:149.5px;font-size:6.9px;color:#e0e0e0;">電路板主體</div>
<div class="a" style="left:763px;top:161.5px;width:9.5px;height:7px;background:#b8a030"></div>
<svg class="a" style="left:776px;top:162.5px" width="8" height="5" viewBox="0 0 8 5"><circle cx="4" cy="2.5" r="4.8" fill="#383838"/><path d="M.6 2.5C1.7 1 2.8.4 4 .4s2.3.6 3.4 2.1C6.3 4 5.2 4.6 4 4.6S1.7 4 .6 2.5z" fill="#d8d8d8"/><circle cx="4" cy="2.5" r="1.2" fill="#383838"/></svg>
<div class="t" style="left:788px;top:160px;font-size:6.9px;color:#e0e0e0;">頂層銅</div>
<div class="a" style="left:763px;top:172.0px;width:9.5px;height:7px;background:#b8a030"></div>
<svg class="a" style="left:776px;top:173.0px" width="8" height="5" viewBox="0 0 8 5"><circle cx="4" cy="2.5" r="4.8" fill="#383838"/><path d="M.6 2.5C1.7 1 2.8.4 4 .4s2.3.6 3.4 2.1C6.3 4 5.2 4.6 4 4.6S1.7 4 .6 2.5z" fill="#d8d8d8"/><circle cx="4" cy="2.5" r="1.2" fill="#383838"/></svg>
<div class="t" style="left:788px;top:170.5px;font-size:6.9px;color:#e0e0e0;">底層銅</div>
<svg class="a" style="left:776px;top:183.3px" width="8" height="5" viewBox="0 0 8 5"><circle cx="4" cy="2.5" r="4.8" fill="#383838"/><path d="M.6 2.5C1.7 1 2.8.4 4 .4s2.3.6 3.4 2.1C6.3 4 5.2 4.6 4 4.6S1.7 4 .6 2.5z" fill="#d8d8d8"/><circle cx="4" cy="2.5" r="1.2" fill="#383838"/></svg>
<div class="t" style="left:788px;top:180.8px;font-size:6.9px;color:#e0e0e0;">黏合劑</div>
<div class="a" style="left:763px;top:192.5px;width:9.5px;height:7px;background:#8a8a8a"></div>
<svg class="a" style="left:776px;top:193.5px" width="8" height="5" viewBox="0 0 8 5"><circle cx="4" cy="2.5" r="4.8" fill="#383838"/><path d="M.6 2.5C1.7 1 2.8.4 4 .4s2.3.6 3.4 2.1C6.3 4 5.2 4.6 4 4.6S1.7 4 .6 2.5z" fill="#d8d8d8"/><circle cx="4" cy="2.5" r="1.2" fill="#383838"/></svg>
<div class="t" style="left:788px;top:191px;font-size:6.9px;color:#e0e0e0;">焊錫膏</div>
<div class="a" style="left:763px;top:203.1px;width:9.5px;height:7px;background:#e8e8e8"></div>
<svg class="a" style="left:776px;top:204.1px" width="8" height="5" viewBox="0 0 8 5"><circle cx="4" cy="2.5" r="4.8" fill="#383838"/><path d="M.6 2.5C1.7 1 2.8.4 4 .4s2.3.6 3.4 2.1C6.3 4 5.2 4.6 4 4.6S1.7 4 .6 2.5z" fill="#d8d8d8"/><circle cx="4" cy="2.5" r="1.2" fill="#383838"/></svg>
<div class="t" style="left:788px;top:201.6px;font-size:6.9px;color:#e0e0e0;">頂層絲印</div>
<div class="a" style="left:763px;top:213.5px;width:9.5px;height:7px;background:#e8e8e8"></div>
<svg class="a" style="left:776px;top:214.5px" width="8" height="5" viewBox="0 0 8 5"><circle cx="4" cy="2.5" r="4.8" fill="#383838"/><path d="M.6 2.5C1.7 1 2.8.4 4 .4s2.3.6 3.4 2.1C6.3 4 5.2 4.6 4 4.6S1.7 4 .6 2.5z" fill="#d8d8d8"/><circle cx="4" cy="2.5" r="1.2" fill="#383838"/></svg>
<div class="t" style="left:788px;top:212px;font-size:6.9px;color:#e0e0e0;">底層絲印</div>
<div class="a" style="left:763px;top:223.9px;width:9.5px;height:7px;background:#3a4e42"></div>
<svg class="a" style="left:776px;top:224.9px" width="8" height="5" viewBox="0 0 8 5"><circle cx="4" cy="2.5" r="4.8" fill="#383838"/><path d="M.6 2.5C1.7 1 2.8.4 4 .4s2.3.6 3.4 2.1C6.3 4 5.2 4.6 4 4.6S1.7 4 .6 2.5z" fill="#d8d8d8"/><circle cx="4" cy="2.5" r="1.2" fill="#383838"/></svg>
<div class="t" style="left:788px;top:222.4px;font-size:6.9px;color:#e0e0e0;">頂層阻焊</div>
<div class="a" style="left:763px;top:234.1px;width:9.5px;height:7px;background:#3a4e42"></div>
<svg class="a" style="left:776px;top:235.1px" width="8" height="5" viewBox="0 0 8 5"><circle cx="4" cy="2.5" r="4.8" fill="#383838"/><path d="M.6 2.5C1.7 1 2.8.4 4 .4s2.3.6 3.4 2.1C6.3 4 5.2 4.6 4 4.6S1.7 4 .6 2.5z" fill="#d8d8d8"/><circle cx="4" cy="2.5" r="1.2" fill="#383838"/></svg>
<div class="t" style="left:788px;top:232.6px;font-size:6.9px;color:#e0e0e0;">底層阻焊</div>
<div class="a" style="left:763px;top:244.5px;width:9.5px;height:7px;background:repeating-conic-gradient(#000 0 25%,#333 0 50%) 0 0/4px 4px"></div>
<svg class="a" style="left:776px;top:245.5px" width="8" height="5" viewBox="0 0 8 5"><circle cx="4" cy="2.5" r="4.8" fill="#383838"/><path d="M.6 2.5C1.7 1 2.8.4 4 .4s2.3.6 3.4 2.1C6.3 4 5.2 4.6 4 4.6S1.7 4 .6 2.5z" fill="#d8d8d8"/><circle cx="4" cy="2.5" r="1.2" fill="#383838"/></svg>
<div class="t" style="left:788px;top:243px;font-size:6.9px;color:#e0e0e0;">User.Drawings</div>
<div class="a" style="left:763px;top:254.89999999999998px;width:9.5px;height:7px;background:repeating-conic-gradient(#000 0 25%,#333 0 50%) 0 0/4px 4px"></div>
<svg class="a" style="left:776px;top:255.89999999999998px" width="8" height="5" viewBox="0 0 8 5"><circle cx="4" cy="2.5" r="4.8" fill="#383838"/><path d="M.6 2.5C1.7 1 2.8.4 4 .4s2.3.6 3.4 2.1C6.3 4 5.2 4.6 4 4.6S1.7 4 .6 2.5z" fill="#d8d8d8"/><circle cx="4" cy="2.5" r="1.2" fill="#383838"/></svg>
<div class="t" style="left:788px;top:253.39999999999998px;font-size:6.9px;color:#e0e0e0;">User.Comments</div>
<div class="a" style="left:763px;top:265.2px;width:9.5px;height:7px;background:repeating-conic-gradient(#000 0 25%,#333 0 50%) 0 0/4px 4px"></div>
<svg class="a" style="left:776px;top:266.2px" width="8" height="5" viewBox="0 0 8 5"><circle cx="4" cy="2.5" r="4.8" fill="#383838"/><path d="M.6 2.5C1.7 1 2.8.4 4 .4s2.3.6 3.4 2.1C6.3 4 5.2 4.6 4 4.6S1.7 4 .6 2.5z" fill="#d8d8d8"/><circle cx="4" cy="2.5" r="1.2" fill="#383838"/></svg>
<div class="t" style="left:788px;top:263.7px;font-size:6.9px;color:#e0e0e0;">User.Eco1</div>
<div class="a" style="left:763px;top:275.7px;width:9.5px;height:7px;background:repeating-conic-gradient(#000 0 25%,#333 0 50%) 0 0/4px 4px"></div>
<svg class="a" style="left:776px;top:276.7px" width="8" height="5" viewBox="0 0 8 5"><circle cx="4" cy="2.5" r="4.8" fill="#383838"/><path d="M.6 2.5C1.7 1 2.8.4 4 .4s2.3.6 3.4 2.1C6.3 4 5.2 4.6 4 4.6S1.7 4 .6 2.5z" fill="#d8d8d8"/><circle cx="4" cy="2.5" r="1.2" fill="#383838"/></svg>
<div class="t" style="left:788px;top:274.2px;font-size:6.9px;color:#e0e0e0;">User.Eco2</div>
<svg class="a" style="left:776px;top:293.5px" width="8" height="5" viewBox="0 0 8 5"><circle cx="4" cy="2.5" r="4.8" fill="#383838"/><path d="M.6 2.5C1.7 1 2.8.4 4 .4s2.3.6 3.4 2.1C6.3 4 5.2 4.6 4 4.6S1.7 4 .6 2.5z" fill="#d8d8d8"/><circle cx="4" cy="2.5" r="1.2" fill="#383838"/></svg>
<div class="t" style="left:788px;top:291px;font-size:6.9px;color:#e0e0e0;">通孔模型</div>
<svg class="a" style="left:776px;top:303.9px" width="8" height="5" viewBox="0 0 8 5"><circle cx="4" cy="2.5" r="4.8" fill="#383838"/><path d="M.6 2.5C1.7 1 2.8.4 4 .4s2.3.6 3.4 2.1C6.3 4 5.2 4.6 4 4.6S1.7 4 .6 2.5z" fill="#d8d8d8"/><circle cx="4" cy="2.5" r="1.2" fill="#383838"/></svg>
<div class="t" style="left:788px;top:301.4px;font-size:6.9px;color:#e0e0e0;">表面貼著模型</div>
<svg class="a" style="left:776px;top:314.2px" width="8" height="5" viewBox="0 0 8 5"><circle cx="4" cy="2.5" r="4.8" fill="#383838"/><path d="M.6 2.5C1.7 1 2.8.4 4 .4s2.3.6 3.4 2.1C6.3 4 5.2 4.6 4 4.6S1.7 4 .6 2.5z" fill="#d8d8d8"/><circle cx="4" cy="2.5" r="1.2" fill="#383838"/></svg>
<div class="t" style="left:788px;top:311.7px;font-size:6.9px;color:#e0e0e0;">虛擬模型</div>
<svg class="a" style="left:776px;top:324.5px" width="8" height="5" viewBox="0 0 8 5"><circle cx="4" cy="2.5" r="4.8" fill="#383838"/><path d="M.6 2.5C1.7 1 2.8.4 4 .4s2.3.6 3.4 2.1C6.3 4 5.2 4.6 4 4.6S1.7 4 .6 2.5z" fill="#d8d8d8"/><circle cx="4" cy="2.5" r="1.2" fill="#383838"/></svg>
<div class="t" style="left:788px;top:322px;font-size:6.9px;color:#e0e0e0;">模型不存在 POS 檔案中</div>
<svg class="a" style="left:776px;top:334.9px" width="8" height="5" viewBox="0 0 8 5"><circle cx="4" cy="2.5" r="4.8" fill="#383838"/><path d="M.6 2.5C1.7 1 2.8.4 4 .4s2.3.6 3.4 2.1C6.3 4 5.2 4.6 4 4.6S1.7 4 .6 2.5z" fill="#777"/><circle cx="4" cy="2.5" r="1.2" fill="#383838"/><path d="M.5 4.5L7.5.5" stroke="#777" stroke-width=".6"/></svg>
<div class="t" style="left:788px;top:332.4px;font-size:6.9px;color:#e0e0e0;">標記為 DNP (不作裝配)</div>
<svg class="a" style="left:776px;top:345.1px" width="8" height="5" viewBox="0 0 8 5"><circle cx="4" cy="2.5" r="4.8" fill="#383838"/><path d="M.6 2.5C1.7 1 2.8.4 4 .4s2.3.6 3.4 2.1C6.3 4 5.2 4.6 4 4.6S1.7 4 .6 2.5z" fill="#777"/><circle cx="4" cy="2.5" r="1.2" fill="#383838"/><path d="M.5 4.5L7.5.5" stroke="#777" stroke-width=".6"/></svg>
<div class="t" style="left:788px;top:342.6px;font-size:6.9px;color:#e0e0e0;">模型邊框</div>
<svg class="a" style="left:776px;top:363.2px" width="8" height="5" viewBox="0 0 8 5"><circle cx="4" cy="2.5" r="4.8" fill="#383838"/><path d="M.6 2.5C1.7 1 2.8.4 4 .4s2.3.6 3.4 2.1C6.3 4 5.2 4.6 4 4.6S1.7 4 .6 2.5z" fill="#d8d8d8"/><circle cx="4" cy="2.5" r="1.2" fill="#383838"/></svg>
<div class="t" style="left:788px;top:360.7px;font-size:6.9px;color:#e0e0e0;">值</div>
<svg class="a" style="left:776px;top:373.0px" width="8" height="5" viewBox="0 0 8 5"><circle cx="4" cy="2.5" r="4.8" fill="#383838"/><path d="M.6 2.5C1.7 1 2.8.4 4 .4s2.3.6 3.4 2.1C6.3 4 5.2 4.6 4 4.6S1.7 4 .6 2.5z" fill="#d8d8d8"/><circle cx="4" cy="2.5" r="1.2" fill="#383838"/></svg>
<div class="t" style="left:788px;top:370.5px;font-size:6.9px;color:#e0e0e0;">參考</div>
<svg class="a" style="left:776px;top:383.2px" width="8" height="5" viewBox="0 0 8 5"><circle cx="4" cy="2.5" r="4.8" fill="#383838"/><path d="M.6 2.5C1.7 1 2.8.4 4 .4s2.3.6 3.4 2.1C6.3 4 5.2 4.6 4 4.6S1.7 4 .6 2.5z" fill="#d8d8d8"/><circle cx="4" cy="2.5" r="1.2" fill="#383838"/></svg>
<div class="t" style="left:788px;top:380.7px;font-size:6.9px;color:#e0e0e0;">封裝文字</div>
<svg class="a" style="left:776px;top:393.5px" width="8" height="5" viewBox="0 0 8 5"><circle cx="4" cy="2.5" r="4.8" fill="#383838"/><path d="M.6 2.5C1.7 1 2.8.4 4 .4s2.3.6 3.4 2.1C6.3 4 5.2 4.6 4 4.6S1.7 4 .6 2.5z" fill="#777"/><circle cx="4" cy="2.5" r="1.2" fill="#383838"/><path d="M.5 4.5L7.5.5" stroke="#777" stroke-width=".6"/></svg>
<div class="t" style="left:788px;top:391px;font-size:6.9px;color:#e0e0e0;">板外絲印層</div>
<svg class="a" style="left:776px;top:409.5px" width="8" height="5" viewBox="0 0 8 5"><circle cx="4" cy="2.5" r="4.8" fill="#383838"/><path d="M.6 2.5C1.7 1 2.8.4 4 .4s2.3.6 3.4 2.1C6.3 4 5.2 4.6 4 4.6S1.7 4 .6 2.5z" fill="#d8d8d8"/><circle cx="4" cy="2.5" r="1.2" fill="#383838"/></svg>
<div class="t" style="left:788px;top:407px;font-size:6.9px;color:#e0e0e0;">3D 座標軸</div>
<div class="a" style="left:763px;top:419.5px;width:9.5px;height:7px;background:#d0d0ec"></div>
<div class="t" style="left:788px;top:418px;font-size:6.9px;color:#e0e0e0;">背景起始色</div>
<div class="a" style="left:763px;top:428.5px;width:9.5px;height:4px;background:#6a6a88"></div>
<div class="t" style="left:788px;top:428px;font-size:6.9px;color:#e0e0e0;height:4px;overflow:hidden">背景結束色</div>
<div class="a" style="left:760px;top:432px;width:103px;height:5px;background:#2a2a2a"></div>
<div class="a" style="left:764px;top:436px;width:8px;height:8px;background:#555;border-radius:2px"></div>
<div class="t" style="left:776px;top:435px;font-size:7.1px;color:#e0e0e0;">使用電路板疊層顏色</div>
<div class="a" style="left:760px;top:446px;width:110px;height:1px;background:#3c3c3c"></div>
<div class="t" style="left:764px;top:452px;font-size:7px;color:#ddd;">預設 (Ctrl+Tab):</div>
<div class="a" style="left:764px;top:462px;width:102px;height:12px;background:#555;border-radius:3px"></div>
<div class="a" style="left:768px;top:468px;width:88px;height:1px;background:#777"></div>
<div class="a" style="left:856px;top:462.5px;width:10px;height:11px;background:#2a6ae6;border-radius:3px"></div>
<svg class="a" style="left:858px;top:464px" width="6" height="8" viewBox="0 0 6 8"><path d="M.8 3L3 .8 5.2 3M.8 5L3 7.2 5.2 5" stroke="#fff" stroke-width="1" fill="none"/></svg>
<div class="t" style="left:764px;top:476px;font-size:7px;color:#ddd;">視角 (Option+Tab):</div>
<div class="a" style="left:764px;top:486px;width:102px;height:11.5px;background:#555;border-radius:3px"></div>
<div class="a" style="left:768px;top:492px;width:88px;height:1px;background:#777"></div>
<div class="a" style="left:856px;top:486.5px;width:10px;height:10.5px;background:#2a6ae6;border-radius:3px"></div>
<svg class="a" style="left:858px;top:488px" width="6" height="8" viewBox="0 0 6 8"><path d="M.8 3L3 .8 5.2 3M.8 5L3 7.2 5.2 5" stroke="#fff" stroke-width="1" fill="none"/></svg>
<div class="a" style="left:130px;top:501px;width:740.5px;height:1px;background:#1c1c1c"></div>
<div class="a" style="left:130px;top:502px;width:740.5px;height:16px;background:#2c2c2c;border-radius:0 0 9px 9px"></div>
<div class="t" style="left:132.7px;top:504.5px;font-size:6.5px;color:#cfcfcf;">重新載入時間 0.007 s</div>
<div class="a" style="left:34.5px;top:598.3px;width:931px;height:44px;background:linear-gradient(90deg,#2e3820 0%,#2c3420 35%,#28291f 65%,#2c2924 100%);border-radius:11px;border:1px solid rgba(200,210,180,.08)"></div>
<svg class="a" style="left:39.8px;top:604px" width="29" height="30" viewBox="0 0 29 30"><defs><clipPath id="fc"><rect width="29" height="30" rx="7"/></clipPath></defs><g clip-path="url(#fc)"><rect width="29" height="30" fill="#3c94ec"/><path d="M15 0H29V30H15C13 24 12 20 13.5 16H11C11 9 13 4 15 0z" fill="#e8eef6"/></g><path d="M6 20c5 4 13 4 18 0" stroke="#1a2a4a" stroke-width="1" fill="none"/><rect x="8" y="9" width="1" height="3" fill="#1a2a4a"/><rect x="20" y="9" width="1" height="3" fill="#1a2a4a"/></svg>
<svg class="a" style="left:78.7px;top:604px" width="29" height="30" viewBox="0 0 29 30"><rect width="29" height="30" rx="7" fill="#c8c8c4"/><rect x="5" y="5" width="5" height="5" rx="1.3" fill="#58d058"/><rect x="12" y="5" width="5" height="5" rx="1.3" fill="#f8c030"/><rect x="19" y="5" width="5" height="5" rx="1.3" fill="#f89830"/><rect x="5" y="12" width="5" height="5" rx="1.3" fill="#e83a30"/><rect x="12" y="12" width="5" height="5" rx="1.3" fill="#b8c8d0"/><rect x="19" y="12" width="5" height="5" rx="1.3" fill="#f05878"/><rect x="5" y="19" width="5" height="5" rx="1.3" fill="#9a58e0"/><rect x="12" y="19" width="5" height="5" rx="1.3" fill="#3a9af0"/><rect x="19" y="19" width="5" height="5" rx="1.3" fill="#58d8b0"/></svg>
<svg class="a" style="left:117.6px;top:604px" width="29" height="30" viewBox="0 0 29 30"><rect width="29" height="30" rx="7" fill="#f4f4f4"/><circle cx="14.5" cy="15" r="11.5" fill="#2a8af0"/><circle cx="14.5" cy="15" r="10" fill="none" stroke="#bcdcfc" stroke-width=".5" stroke-dasharray=".5 1"/><path d="M22 7.5L13 14l3 2z" fill="#f04040"/><path d="M7 22.5L13 14l3 2z" fill="#f0f0f0"/></svg>
<svg class="a" style="left:156.4px;top:604px" width="29" height="30" viewBox="0 0 29 30"><rect width="29" height="30" rx="7" fill="#48c848"/><ellipse cx="14.5" cy="14" rx="10" ry="8" fill="#fff"/><path d="M7 19l-2 5 6-3z" fill="#fff"/></svg>
<svg class="a" style="left:195.3px;top:604px" width="29" height="30" viewBox="0 0 29 30"><defs><linearGradient id="mg" x1="0" y1="0" x2="0" y2="1"><stop offset="0" stop-color="#3ab0fa"/><stop offset="1" stop-color="#1a6ae8"/></linearGradient></defs><rect width="29" height="30" rx="7" fill="url(#mg)"/><rect x="5" y="9" width="19" height="13" rx="1" fill="#f4f4f8"/><path d="M5 9l9.5 7 9.5-7" stroke="#8aa" stroke-width=".8" fill="none"/></svg>
<svg class="a" style="left:234.2px;top:604px" width="29" height="30" viewBox="0 0 29 30"><rect width="29" height="30" rx="7" fill="#e4ece0"/><path d="M0 18L29 8V18L0 30z" fill="#8fd070"/><path d="M10 0h5l-2 30H7z" fill="#3a8af0"/><path d="M0 22l8-4v12H7a7 7 0 0 1-7-7z" fill="#f070a0"/><path d="M20 24l9-3v2a7 7 0 0 1-7 7h-2z" fill="#f8d040"/><circle cx="11" cy="17" r="5" fill="#2a7af0" stroke="#fff" stroke-width="1.2"/><path d="M11 14l2.3 5-2.3-1-2.3 1z" fill="#fff"/></svg>
<svg class="a" style="left:273.1px;top:604px" width="29" height="30" viewBox="0 0 29 30"><rect width="29" height="30" rx="7" fill="#fbfbfb"/><ellipse cx="14.5" cy="9.5" rx="3" ry="5.5" fill="#f8c030" opacity=".85" transform="rotate(0 14.5 15)"/><ellipse cx="14.5" cy="9.5" rx="3" ry="5.5" fill="#f89030" opacity=".85" transform="rotate(45 14.5 15)"/><ellipse cx="14.5" cy="9.5" rx="3" ry="5.5" fill="#f05050" opacity=".85" transform="rotate(90 14.5 15)"/><ellipse cx="14.5" cy="9.5" rx="3" ry="5.5" fill="#d04ab0" opacity=".85" transform="rotate(135 14.5 15)"/><ellipse cx="14.5" cy="9.5" rx="3" ry="5.5" fill="#8a5ae0" opacity=".85" transform="rotate(180 14.5 15)"/><ellipse cx="14.5" cy="9.5" rx="3" ry="5.5" fill="#3a8af0" opacity=".85" transform="rotate(225 14.5 15)"/><ellipse cx="14.5" cy="9.5" rx="3" ry="5.5" fill="#30c0c0" opacity=".85" transform="rotate(270 14.5 15)"/><ellipse cx="14.5" cy="9.5" rx="3" ry="5.5" fill="#58c858" opacity=".85" transform="rotate(315 14.5 15)"/></svg>
<svg class="a" style="left:312.0px;top:604px" width="29" height="30" viewBox="0 0 29 30"><rect width="29" height="30" rx="7" fill="#48c848"/><rect x="5" y="10" width="13" height="10" rx="2" fill="#fff"/><path d="M18 14l6-4v10l-6-4z" fill="#fff"/></svg>
<svg class="a" style="left:350.8px;top:604px" width="29" height="30" viewBox="0 0 29 30"><rect width="29" height="30" rx="7" fill="#fafafa"/><path d="M0 7a7 7 0 0 1 7-7h15a7 7 0 0 1 7 7v2H0z" fill="#f04a3a"/><text x="14.5" y="7.5" font-size="6" fill="#fff" text-anchor="middle" font-family="Liberation Sans">4月</text><text x="14.5" y="25.5" font-size="15" fill="#222" text-anchor="middle" font-family="Liberation Sans">1</text></svg>
<svg class="a" style="left:389.7px;top:604px" width="29" height="30" viewBox="0 0 29 30"><rect width="29" height="30" rx="7" fill="#a8845a"/><rect x="26" y="6" width="3" height="6" fill="#e8a030"/><rect x="26" y="12" width="3" height="6" fill="#5a8af0"/><rect x="26" y="18" width="3" height="6" fill="#58b858"/><circle cx="13.5" cy="15" r="8" fill="none" stroke="#d4b890" stroke-width="1.2"/><circle cx="13.5" cy="12.5" r="3" fill="#d4b890"/><path d="M8 20a6 5 0 0 1 11 0" fill="#d4b890"/></svg>
<svg class="a" style="left:428.6px;top:604px" width="29" height="30" viewBox="0 0 29 30"><rect width="29" height="30" rx="7" fill="#fbfbfb"/><circle cx="7" cy="8" r="2" fill="#3a7af0"/><circle cx="7" cy="15" r="2" fill="#f04a4a"/><circle cx="7" cy="22" r="2" fill="#f0a030"/><path d="M11 8h13M11 15h13M11 22h13" stroke="#ccc" stroke-width=".8"/></svg>
<svg class="a" style="left:467.5px;top:604px" width="29" height="30" viewBox="0 0 29 30"><rect width="29" height="30" rx="7" fill="#f6f4ee"/><path d="M0 7a7 7 0 0 1 7-7h15a7 7 0 0 1 7 7v2H0z" fill="#f8d040"/><path d="M3 14h23M3 19h23M3 24h23" stroke="#ddd" stroke-width=".6"/></svg>
<svg class="a" style="left:506.4px;top:604px" width="29" height="30" viewBox="0 0 29 30"><rect width="29" height="30" rx="7" fill="#fbfbfb"/><circle cx="12" cy="18" r="7" fill="#f07040"/><rect x="13" y="5" width="12" height="12" rx="1" fill="#6ab8f0"/><path d="M5 17c3-6 4 2 7-3s3 4 6 0 4-3 6-2" stroke="#1a2a6a" stroke-width="1.6" fill="none"/></svg>
<svg class="a" style="left:545.2px;top:604px" width="29" height="30" viewBox="0 0 29 30"><rect width="29" height="30" rx="7" fill="#1c1e1e"/><path d="M9.6 11.6c.4-.5.6-1 .5-1.6-.5 0-1.1.3-1.4.8-.3.4-.6 1-.5 1.5.5 0 1.1-.3 1.4-.7zM10.1 12.7c-.8-.1-1.4.4-1.8.4s-1-.4-1.6-.4c-.8 0-1.6.7-1.6 2.1 0 .9.3 1.8.8 2.4.4.5.7 1 1.2 1s.7-.3 1.3-.3.8.3 1.3.3.8-.5 1.1-1c.4-.5.5-1.1.5-1.1s-1-.4-1-1.6c0-1 .8-1.5.9-1.5-.5-.7-1.2-.8-1.4-.8z" fill="#fff"/><text x="18" y="18.5" font-size="8.5" fill="#fff" text-anchor="middle" font-family="Liberation Sans" font-weight="bold">tv</text></svg>
<svg class="a" style="left:584.1px;top:604px" width="29" height="30" viewBox="0 0 29 30"><defs><linearGradient id="mu" x1="0" y1="0" x2="0" y2="1"><stop offset="0" stop-color="#fa5a6a"/><stop offset="1" stop-color="#e82a48"/></linearGradient></defs><rect width="29" height="30" rx="7" fill="url(#mu)"/><path d="M11 21V9l9-2v12" stroke="#fff" stroke-width="1.8" fill="none"/><circle cx="9" cy="21" r="2.5" fill="#fff"/><circle cx="18" cy="19" r="2.5" fill="#fff"/></svg>
<svg class="a" style="left:623.0px;top:604px" width="29" height="30" viewBox="0 0 29 30"><rect x="0" y="6" width="29" height="24" rx="2" fill="#f8f8f8" opacity=".0"/><path d="M0 27h29" stroke="#eee" stroke-width="2"/><rect x="3" y="17" width="5" height="9" fill="#f04a3a"/><rect x="9" y="11" width="5" height="15" fill="#f8a030"/><rect x="15" y="2" width="5" height="24" fill="#58c858"/><rect x="21" y="9" width="5" height="17" fill="#3a8af0"/></svg>
<svg class="a" style="left:661.9px;top:604px" width="29" height="30" viewBox="0 0 29 30"><defs><linearGradient id="as" x1="0" y1="0" x2="0" y2="1"><stop offset="0" stop-color="#2ab4fa"/><stop offset="1" stop-color="#1a6ef0"/></linearGradient></defs><rect width="29" height="30" rx="7" fill="url(#as)"/><path d="M11 6l9 16M18 6L9 22M6 18h17" stroke="#fff" stroke-width="2" stroke-linecap="round"/></svg>
<svg class="a" style="left:700.8px;top:604px" width="29" height="30" viewBox="0 0 29 30"><rect width="29" height="30" rx="7" fill="#9a9a9a"/><circle cx="14.5" cy="15" r="11" fill="#585858"/><circle cx="14.5" cy="15" r="8.5" fill="none" stroke="#bbb" stroke-width="1.5"/><circle cx="14.5" cy="15" r="3" fill="none" stroke="#bbb" stroke-width="1.3"/><path d="M14.5 12V6.5M12 16.5L7 19.5M17 16.5L22 19.5" stroke="#bbb" stroke-width="1.3"/></svg>
<div class="a" style="left:744.5px;top:604px;width:1px;height:31px;background:rgba(255,255,255,.25)"></div>
<svg class="a" style="left:757.5px;top:604px" width="29" height="30" viewBox="0 0 29 30"><rect width="29" height="30" rx="7" fill="#fff"/><path d="M14.5 5C8.5 5 4.5 9 4.5 14.5c0 3 1.2 5.5 3.3 7.2V25l3-1.6c1.1.3 2.3.5 3.7.5 6 0 10-4 10-9.5S20.5 5 14.5 5z" fill="#1a7af8"/><path d="M8.5 17.5l4-4.3 2.2 2.1 3.8-2.1-4 4.3-2.2-2.1z" fill="#fff"/></svg>
<svg class="a" style="left:796.5px;top:604px" width="29" height="30" viewBox="0 0 29 30"><rect width="29" height="30" rx="7" fill="#3a8a30"/><path d="M8 0v8l6 6v16M14 0v6l5 5h10M0 20h8l4 4" stroke="#a8d890" stroke-width="1" fill="none"/><circle cx="6" cy="18" r="2" fill="#f0a030"/><circle cx="23" cy="8" r="2" fill="#f0a030"/><rect x="18" y="18" width="6" height="4" rx="1" fill="#f0a030"/></svg>
<svg class="a" style="left:835.5px;top:604px" width="29" height="30" viewBox="0 0 29 30"><rect width="29" height="30" rx="7" fill="#3438b8"/><text x="14.5" y="22" font-size="16" fill="#fff" text-anchor="middle" font-family="Liberation Sans" font-weight="bold">Ki</text><circle cx="20.5" cy="8" r="1.8" fill="#f04a4a"/></svg>
<div class="a" style="left:880px;top:604px;width:1px;height:31px;background:rgba(255,255,255,.25)"></div>
<svg class="a" style="left:890px;top:604px" width="31" height="30" viewBox="0 0 31 30"><path d="M8 2h10l4 4v6H8z" fill="#f8f8f8"/><path d="M0 8a2 2 0 0 1 2-2h8l2 2h15a2 2 0 0 1 2 2v18a2 2 0 0 1-2 2H2a2 2 0 0 1-2-2z" fill="#5aaee8"/><path d="M0 12h29v16a2 2 0 0 1-2 2H2a2 2 0 0 1-2-2z" fill="#78c4f4"/></svg>
<svg class="a" style="left:932px;top:604px" width="27" height="30" viewBox="0 0 27 30"><path d="M1 4h24l-2.5 25a2 2 0 0 1-2 1.5H5.5a2 2 0 0 1-2-1.5z" fill="#8a8e92" opacity=".9"/><path d="M1 4h24" stroke="#ccc" stroke-width="2"/><path d="M6 8l1.5 19M13 8v19M20 8l-1.5 19" stroke="#666" stroke-width=".7"/><path d="M4 5c3-3 10-4 17-1" stroke="#ddd" stroke-width="2" fill="none"/></svg>
<div class="a" style="left:53.3px;top:639.5px;width:2px;height:2px;border-radius:50%;background:#ddd"></div>
<div class="a" style="left:131.1px;top:639.5px;width:2px;height:2px;border-radius:50%;background:#ddd"></div>
<div class="a" style="left:597.6px;top:639.5px;width:2px;height:2px;border-radius:50%;background:#ddd"></div>
<div class="a" style="left:771px;top:639.5px;width:2px;height:2px;border-radius:50%;background:#ddd"></div>
<div class="a" style="left:849.3px;top:639.5px;width:2px;height:2px;border-radius:50%;background:#ddd"></div>
</div></body></html>
